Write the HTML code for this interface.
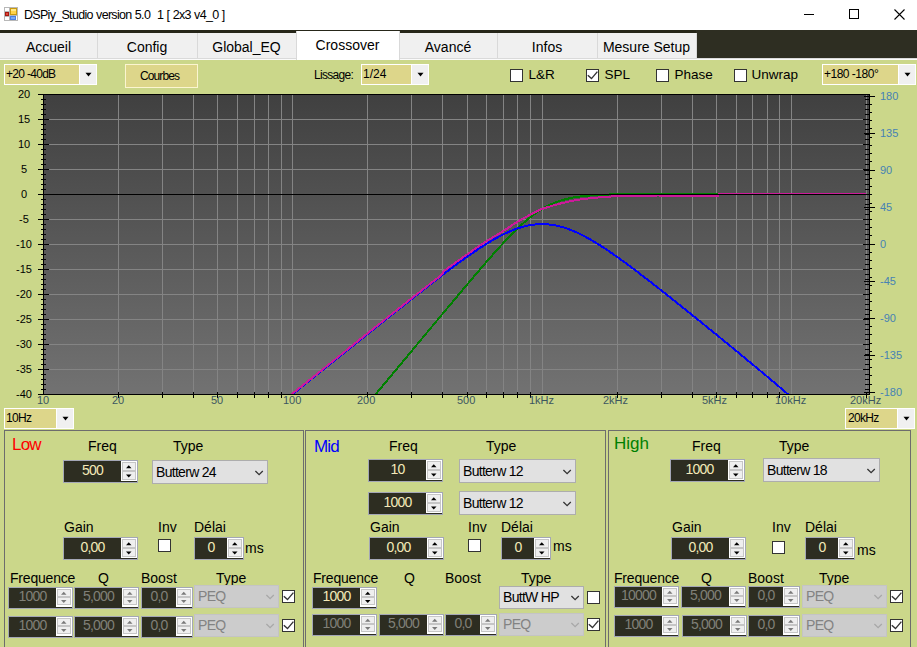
<!DOCTYPE html><html><head><meta charset="utf-8"><style>
*{margin:0;padding:0;box-sizing:border-box}
html,body{width:917px;height:647px;overflow:hidden;background:#fff;font-family:"Liberation Sans",sans-serif;color:#000}
.a{position:absolute}
.t{position:absolute;white-space:pre;line-height:1}
.cb{position:absolute;background:#fff;border:1px solid #333}
.combo{position:absolute;background:#fff}
.combo .y{position:absolute;left:1px;top:1px;bottom:1px;background:#ddd68a}
.combo .b{position:absolute;top:1px;bottom:1px;right:1px;background:#f0f0f0}
.tri{position:absolute;width:0;height:0;border-left:4px solid transparent;border-right:4px solid transparent;border-top:4px solid #000}
.spin{position:absolute;background:#fff;border:1px solid #a6a6b0}
.spin .d{position:absolute;left:0;top:-1px;bottom:1px;background:transparent;color:#f3e9b8;font-size:13px;letter-spacing:-0.3px;text-align:center}
.spin{background:#2d2d21}
.spin .bt{position:absolute;right:0;top:0;bottom:0;width:16px;background:#fff}
.grp{position:absolute;border:1px solid #6d6d6d;border-bottom:none}
.lbl{position:absolute;white-space:pre;font-size:14px;line-height:1}
.ddl{position:absolute;background:#e1e1e1;border:1px solid #adadad;font-size:14px}
</style></head><body>
<div class="a" style="left:0;top:0;width:917px;height:30px;background:#fff"></div>
<svg class="a" style="left:4px;top:7px" width="14" height="14" viewBox="0 0 14 14" shape-rendering="crispEdges">
<rect x="0" y="0" width="14" height="14" fill="#b8b8b8"/>
<rect x="1" y="1" width="4" height="3" fill="#fff"/>
<rect x="1" y="10" width="2" height="3" fill="#fff"/>
<rect x="3" y="10" width="2" height="3" fill="#fff"/>
<rect x="12" y="9" width="1" height="4" fill="#fff"/>
<rect x="6" y="1" width="7" height="7" fill="#c99a10"/>
<rect x="7" y="2" width="5" height="5" fill="#ffd34a"/>
<rect x="7" y="2" width="5" height="2" fill="#ffe98a"/>
<rect x="1" y="5" width="4" height="4" fill="#a81810"/>
<rect x="2" y="6" width="2" height="2" fill="#e04838"/>
<rect x="6" y="9" width="6" height="4" fill="#4a80e0"/>
<rect x="7" y="10" width="4" height="2" fill="#78a8f8"/>
</svg>
<div class="t" style="left:24px;top:8.5px;font-size:12.5px;color:#000;letter-spacing:-0.7px;word-spacing:0.6px">DSPiy_Studio version 5.0  1 [ 2x3 v4_0 ]</div>
<div class="a" style="left:804px;top:14px;width:10px;height:1px;background:#000"></div>
<div class="a" style="left:849px;top:9px;width:10px;height:10px;border:1px solid #000"></div>
<svg class="a" style="left:894px;top:9px" width="11" height="11"><path d="M0.5 0.5L10.5 10.5M10.5 0.5L0.5 10.5" stroke="#000" stroke-width="1.1"/></svg>
<div class="a" style="left:0;top:30px;width:917px;height:3px;background:#262619"></div>
<div class="a" style="left:696px;top:30px;width:221px;height:28px;background:#2e2e22"></div>
<div class="a" style="left:0;top:33px;width:696px;height:25px;background:#f0f0f0"></div>
<div class="a" style="left:0;top:58px;width:917px;height:1px;background:#dadada"></div>
<div class="a" style="left:0;top:59px;width:917px;height:1px;background:#fbfbfb"></div>
<div class="a" style="left:97px;top:33px;width:1px;height:25px;background:#d9d9d9"></div>
<div class="a" style="left:197px;top:33px;width:1px;height:25px;background:#d9d9d9"></div>
<div class="a" style="left:497px;top:33px;width:1px;height:25px;background:#d9d9d9"></div>
<div class="a" style="left:597px;top:33px;width:1px;height:25px;background:#d9d9d9"></div>
<div class="a" style="left:696px;top:33px;width:1px;height:25px;background:#d9d9d9"></div>
<div class="a" style="left:296px;top:31px;width:104px;height:29px;background:#fff;border-left:1px solid #d9d9d9;border-right:1px solid #d9d9d9"></div>
<div class="t" style="left:0px;top:40px;width:97px;text-align:center;font-size:14px">Accueil</div>
<div class="t" style="left:97px;top:40px;width:100px;text-align:center;font-size:14px">Config</div>
<div class="t" style="left:197px;top:40px;width:99px;text-align:center;font-size:14px">Global_EQ</div>
<div class="t" style="left:296px;top:38px;width:103px;text-align:center;font-size:14px">Crossover</div>
<div class="t" style="left:399px;top:40px;width:98px;text-align:center;font-size:14px">Avancé</div>
<div class="t" style="left:497px;top:40px;width:100px;text-align:center;font-size:14px">Infos</div>
<div class="t" style="left:597px;top:40px;width:99px;text-align:center;font-size:14px">Mesure Setup</div>
<div class="a" style="left:0;top:60px;width:917px;height:587px;background:#cbd78a"></div>
<div class="combo" style="left:4px;top:64px;width:93px;height:21px"><div class="y" style="right:18px"></div><div class="b" style="width:16px"><svg class="a" style="left:0;top:0" width="16" height="19"><path d="M5.5 7.7 L11.5 7.7 L8.5 11.5 Z" fill="#000"/></svg></div><div class="t" style="left:2px;top:4px;font-size:12px;letter-spacing:-0.70px">+20 -40dB</div></div>
<div class="a" style="left:125px;top:64px;width:73px;height:24px;background:#ddd68a;border:1px solid #fbf5d0"></div>
<div class="t" style="left:123px;top:70px;width:73px;text-align:center;font-size:12px;letter-spacing:-0.9px">Courbes</div>
<div class="t" style="left:314px;top:69px;font-size:12px;letter-spacing:-0.7px">Lissage:</div>
<div class="combo" style="left:361px;top:64px;width:68px;height:21px"><div class="y" style="right:18px"></div><div class="b" style="width:16px"><svg class="a" style="left:0;top:0" width="16" height="19"><path d="M5.5 7.7 L11.5 7.7 L8.5 11.5 Z" fill="#000"/></svg></div><div class="t" style="left:2px;top:4px;font-size:12px;letter-spacing:0.00px">1/24</div></div>
<div class="cb" style="left:510px;top:69px;width:13px;height:13px"></div><div class="lbl" style="left:528.5px;top:68px;font-size:13.5px">L&amp;R</div>
<div class="cb" style="left:586px;top:69px;width:13px;height:13px"><svg class="a" style="left:0;top:0" width="11" height="11"><path d="M0.8 5.2L4.5 8.6L10.4 1.6" fill="none" stroke="#333" stroke-width="1.4"/></svg></div><div class="lbl" style="left:604.5px;top:68px;font-size:13.5px">SPL</div>
<div class="cb" style="left:656px;top:69px;width:13px;height:13px"></div><div class="lbl" style="left:674.5px;top:68px;font-size:13.5px">Phase</div>
<div class="cb" style="left:734px;top:69px;width:13px;height:13px"></div><div class="lbl" style="left:751.5px;top:68px;font-size:13.5px">Unwrap</div>
<div class="combo" style="left:822px;top:64px;width:94px;height:21px"><div class="y" style="right:18px"></div><div class="b" style="width:16px"><svg class="a" style="left:0;top:0" width="16" height="19"><path d="M5.5 7.7 L11.5 7.7 L8.5 11.5 Z" fill="#000"/></svg></div><div class="t" style="left:2px;top:4px;font-size:12px;letter-spacing:-0.50px">+180 -180°</div></div>
<svg class="a" style="left:0;top:0" width="917" height="647"><defs><linearGradient id="g" x1="0" y1="0" x2="0" y2="1"><stop offset="0" stop-color="#404040"/><stop offset="1" stop-color="#727272"/></linearGradient></defs><rect x="43" y="94" width="826" height="300" fill="url(#g)"/><line x1="118.5" y1="95" x2="118.5" y2="394" stroke="#848484" stroke-width="1"/><line x1="162.5" y1="95" x2="162.5" y2="394" stroke="#848484" stroke-width="1"/><line x1="193.5" y1="95" x2="193.5" y2="394" stroke="#848484" stroke-width="1"/><line x1="217.5" y1="95" x2="217.5" y2="394" stroke="#848484" stroke-width="1"/><line x1="237.5" y1="95" x2="237.5" y2="394" stroke="#848484" stroke-width="1"/><line x1="254.5" y1="95" x2="254.5" y2="394" stroke="#848484" stroke-width="1"/><line x1="268.5" y1="95" x2="268.5" y2="394" stroke="#848484" stroke-width="1"/><line x1="281.5" y1="95" x2="281.5" y2="394" stroke="#848484" stroke-width="1"/><line x1="292.5" y1="95" x2="292.5" y2="394" stroke="#848484" stroke-width="1"/><line x1="367.5" y1="95" x2="367.5" y2="394" stroke="#848484" stroke-width="1"/><line x1="411.5" y1="95" x2="411.5" y2="394" stroke="#848484" stroke-width="1"/><line x1="442.5" y1="95" x2="442.5" y2="394" stroke="#848484" stroke-width="1"/><line x1="467.5" y1="95" x2="467.5" y2="394" stroke="#848484" stroke-width="1"/><line x1="486.5" y1="95" x2="486.5" y2="394" stroke="#848484" stroke-width="1"/><line x1="503.5" y1="95" x2="503.5" y2="394" stroke="#848484" stroke-width="1"/><line x1="517.5" y1="95" x2="517.5" y2="394" stroke="#848484" stroke-width="1"/><line x1="530.5" y1="95" x2="530.5" y2="394" stroke="#848484" stroke-width="1"/><line x1="542.5" y1="95" x2="542.5" y2="394" stroke="#848484" stroke-width="1"/><line x1="617.5" y1="95" x2="617.5" y2="394" stroke="#848484" stroke-width="1"/><line x1="661.5" y1="95" x2="661.5" y2="394" stroke="#848484" stroke-width="1"/><line x1="692.5" y1="95" x2="692.5" y2="394" stroke="#848484" stroke-width="1"/><line x1="716.5" y1="95" x2="716.5" y2="394" stroke="#848484" stroke-width="1"/><line x1="736.5" y1="95" x2="736.5" y2="394" stroke="#848484" stroke-width="1"/><line x1="752.5" y1="95" x2="752.5" y2="394" stroke="#848484" stroke-width="1"/><line x1="767.5" y1="95" x2="767.5" y2="394" stroke="#848484" stroke-width="1"/><line x1="779.5" y1="95" x2="779.5" y2="394" stroke="#848484" stroke-width="1"/><line x1="791.5" y1="95" x2="791.5" y2="394" stroke="#848484" stroke-width="1"/><line x1="866.5" y1="95" x2="866.5" y2="394" stroke="#848484" stroke-width="1"/><line x1="44" y1="119.5" x2="869" y2="119.5" stroke="#848484" stroke-width="1"/><line x1="44" y1="144.5" x2="869" y2="144.5" stroke="#848484" stroke-width="1"/><line x1="44" y1="169.5" x2="869" y2="169.5" stroke="#848484" stroke-width="1"/><line x1="44" y1="219.5" x2="869" y2="219.5" stroke="#848484" stroke-width="1"/><line x1="44" y1="244.5" x2="869" y2="244.5" stroke="#848484" stroke-width="1"/><line x1="44" y1="269.5" x2="869" y2="269.5" stroke="#848484" stroke-width="1"/><line x1="44" y1="294.5" x2="869" y2="294.5" stroke="#848484" stroke-width="1"/><line x1="44" y1="319.5" x2="869" y2="319.5" stroke="#848484" stroke-width="1"/><line x1="44" y1="344.5" x2="869" y2="344.5" stroke="#848484" stroke-width="1"/><line x1="44" y1="369.5" x2="869" y2="369.5" stroke="#848484" stroke-width="1"/><rect x="43" y="94" width="1" height="301" fill="#000"/><rect x="38" y="94" width="831" height="1" fill="#000"/><rect x="38" y="394" width="832" height="1" fill="#000"/><rect x="869" y="94" width="1" height="301" fill="#000"/><line x1="38" y1="94.5" x2="49" y2="94.5" stroke="#000"/><line x1="41" y1="99.5" x2="46" y2="99.5" stroke="#000"/><line x1="41" y1="104.5" x2="46" y2="104.5" stroke="#000"/><line x1="41" y1="109.5" x2="46" y2="109.5" stroke="#000"/><line x1="41" y1="114.5" x2="46" y2="114.5" stroke="#000"/><line x1="38" y1="119.5" x2="49" y2="119.5" stroke="#000"/><line x1="41" y1="124.5" x2="46" y2="124.5" stroke="#000"/><line x1="41" y1="129.5" x2="46" y2="129.5" stroke="#000"/><line x1="41" y1="134.5" x2="46" y2="134.5" stroke="#000"/><line x1="41" y1="139.5" x2="46" y2="139.5" stroke="#000"/><line x1="38" y1="144.5" x2="49" y2="144.5" stroke="#000"/><line x1="41" y1="149.5" x2="46" y2="149.5" stroke="#000"/><line x1="41" y1="154.5" x2="46" y2="154.5" stroke="#000"/><line x1="41" y1="159.5" x2="46" y2="159.5" stroke="#000"/><line x1="41" y1="164.5" x2="46" y2="164.5" stroke="#000"/><line x1="38" y1="169.5" x2="49" y2="169.5" stroke="#000"/><line x1="41" y1="174.5" x2="46" y2="174.5" stroke="#000"/><line x1="41" y1="179.5" x2="46" y2="179.5" stroke="#000"/><line x1="41" y1="184.5" x2="46" y2="184.5" stroke="#000"/><line x1="41" y1="189.5" x2="46" y2="189.5" stroke="#000"/><line x1="38" y1="194.5" x2="49" y2="194.5" stroke="#000"/><line x1="41" y1="199.5" x2="46" y2="199.5" stroke="#000"/><line x1="41" y1="204.5" x2="46" y2="204.5" stroke="#000"/><line x1="41" y1="209.5" x2="46" y2="209.5" stroke="#000"/><line x1="41" y1="214.5" x2="46" y2="214.5" stroke="#000"/><line x1="38" y1="219.5" x2="49" y2="219.5" stroke="#000"/><line x1="41" y1="224.5" x2="46" y2="224.5" stroke="#000"/><line x1="41" y1="229.5" x2="46" y2="229.5" stroke="#000"/><line x1="41" y1="234.5" x2="46" y2="234.5" stroke="#000"/><line x1="41" y1="239.5" x2="46" y2="239.5" stroke="#000"/><line x1="38" y1="244.5" x2="49" y2="244.5" stroke="#000"/><line x1="41" y1="249.5" x2="46" y2="249.5" stroke="#000"/><line x1="41" y1="254.5" x2="46" y2="254.5" stroke="#000"/><line x1="41" y1="259.5" x2="46" y2="259.5" stroke="#000"/><line x1="41" y1="264.5" x2="46" y2="264.5" stroke="#000"/><line x1="38" y1="269.5" x2="49" y2="269.5" stroke="#000"/><line x1="41" y1="274.5" x2="46" y2="274.5" stroke="#000"/><line x1="41" y1="279.5" x2="46" y2="279.5" stroke="#000"/><line x1="41" y1="284.5" x2="46" y2="284.5" stroke="#000"/><line x1="41" y1="289.5" x2="46" y2="289.5" stroke="#000"/><line x1="38" y1="294.5" x2="49" y2="294.5" stroke="#000"/><line x1="41" y1="299.5" x2="46" y2="299.5" stroke="#000"/><line x1="41" y1="304.5" x2="46" y2="304.5" stroke="#000"/><line x1="41" y1="309.5" x2="46" y2="309.5" stroke="#000"/><line x1="41" y1="314.5" x2="46" y2="314.5" stroke="#000"/><line x1="38" y1="319.5" x2="49" y2="319.5" stroke="#000"/><line x1="41" y1="324.5" x2="46" y2="324.5" stroke="#000"/><line x1="41" y1="329.5" x2="46" y2="329.5" stroke="#000"/><line x1="41" y1="334.5" x2="46" y2="334.5" stroke="#000"/><line x1="41" y1="339.5" x2="46" y2="339.5" stroke="#000"/><line x1="38" y1="344.5" x2="49" y2="344.5" stroke="#000"/><line x1="41" y1="349.5" x2="46" y2="349.5" stroke="#000"/><line x1="41" y1="354.5" x2="46" y2="354.5" stroke="#000"/><line x1="41" y1="359.5" x2="46" y2="359.5" stroke="#000"/><line x1="41" y1="364.5" x2="46" y2="364.5" stroke="#000"/><line x1="38" y1="369.5" x2="49" y2="369.5" stroke="#000"/><line x1="41" y1="374.5" x2="46" y2="374.5" stroke="#000"/><line x1="41" y1="379.5" x2="46" y2="379.5" stroke="#000"/><line x1="41" y1="384.5" x2="46" y2="384.5" stroke="#000"/><line x1="41" y1="389.5" x2="46" y2="389.5" stroke="#000"/><line x1="38" y1="394.5" x2="49" y2="394.5" stroke="#000"/><line x1="118.5" y1="392" x2="118.5" y2="398" stroke="#000"/><line x1="162.5" y1="392" x2="162.5" y2="398" stroke="#000"/><line x1="193.5" y1="392" x2="193.5" y2="398" stroke="#000"/><line x1="217.5" y1="392" x2="217.5" y2="398" stroke="#000"/><line x1="237.5" y1="392" x2="237.5" y2="398" stroke="#000"/><line x1="254.5" y1="392" x2="254.5" y2="398" stroke="#000"/><line x1="268.5" y1="392" x2="268.5" y2="398" stroke="#000"/><line x1="281.5" y1="392" x2="281.5" y2="398" stroke="#000"/><line x1="367.5" y1="392" x2="367.5" y2="398" stroke="#000"/><line x1="411.5" y1="392" x2="411.5" y2="398" stroke="#000"/><line x1="442.5" y1="392" x2="442.5" y2="398" stroke="#000"/><line x1="467.5" y1="392" x2="467.5" y2="398" stroke="#000"/><line x1="486.5" y1="392" x2="486.5" y2="398" stroke="#000"/><line x1="503.5" y1="392" x2="503.5" y2="398" stroke="#000"/><line x1="517.5" y1="392" x2="517.5" y2="398" stroke="#000"/><line x1="530.5" y1="392" x2="530.5" y2="398" stroke="#000"/><line x1="617.5" y1="392" x2="617.5" y2="398" stroke="#000"/><line x1="661.5" y1="392" x2="661.5" y2="398" stroke="#000"/><line x1="692.5" y1="392" x2="692.5" y2="398" stroke="#000"/><line x1="716.5" y1="392" x2="716.5" y2="398" stroke="#000"/><line x1="736.5" y1="392" x2="736.5" y2="398" stroke="#000"/><line x1="752.5" y1="392" x2="752.5" y2="398" stroke="#000"/><line x1="767.5" y1="392" x2="767.5" y2="398" stroke="#000"/><line x1="779.5" y1="392" x2="779.5" y2="398" stroke="#000"/><line x1="866.5" y1="392" x2="866.5" y2="398" stroke="#000"/><line x1="863" y1="94.5" x2="869" y2="94.5" stroke="#000"/><line x1="865" y1="99.5" x2="869" y2="99.5" stroke="#000"/><line x1="865" y1="104.5" x2="869" y2="104.5" stroke="#000"/><line x1="865" y1="109.5" x2="869" y2="109.5" stroke="#000"/><line x1="865" y1="114.5" x2="869" y2="114.5" stroke="#000"/><line x1="863" y1="119.5" x2="869" y2="119.5" stroke="#000"/><line x1="865" y1="124.5" x2="869" y2="124.5" stroke="#000"/><line x1="865" y1="129.5" x2="869" y2="129.5" stroke="#000"/><line x1="865" y1="134.5" x2="869" y2="134.5" stroke="#000"/><line x1="865" y1="139.5" x2="869" y2="139.5" stroke="#000"/><line x1="863" y1="144.5" x2="869" y2="144.5" stroke="#000"/><line x1="865" y1="149.5" x2="869" y2="149.5" stroke="#000"/><line x1="865" y1="154.5" x2="869" y2="154.5" stroke="#000"/><line x1="865" y1="159.5" x2="869" y2="159.5" stroke="#000"/><line x1="865" y1="164.5" x2="869" y2="164.5" stroke="#000"/><line x1="863" y1="169.5" x2="869" y2="169.5" stroke="#000"/><line x1="865" y1="174.5" x2="869" y2="174.5" stroke="#000"/><line x1="865" y1="179.5" x2="869" y2="179.5" stroke="#000"/><line x1="865" y1="184.5" x2="869" y2="184.5" stroke="#000"/><line x1="865" y1="189.5" x2="869" y2="189.5" stroke="#000"/><line x1="863" y1="194.5" x2="869" y2="194.5" stroke="#000"/><line x1="865" y1="199.5" x2="869" y2="199.5" stroke="#000"/><line x1="865" y1="204.5" x2="869" y2="204.5" stroke="#000"/><line x1="865" y1="209.5" x2="869" y2="209.5" stroke="#000"/><line x1="865" y1="214.5" x2="869" y2="214.5" stroke="#000"/><line x1="863" y1="219.5" x2="869" y2="219.5" stroke="#000"/><line x1="865" y1="224.5" x2="869" y2="224.5" stroke="#000"/><line x1="865" y1="229.5" x2="869" y2="229.5" stroke="#000"/><line x1="865" y1="234.5" x2="869" y2="234.5" stroke="#000"/><line x1="865" y1="239.5" x2="869" y2="239.5" stroke="#000"/><line x1="863" y1="244.5" x2="869" y2="244.5" stroke="#000"/><line x1="865" y1="249.5" x2="869" y2="249.5" stroke="#000"/><line x1="865" y1="254.5" x2="869" y2="254.5" stroke="#000"/><line x1="865" y1="259.5" x2="869" y2="259.5" stroke="#000"/><line x1="865" y1="264.5" x2="869" y2="264.5" stroke="#000"/><line x1="863" y1="269.5" x2="869" y2="269.5" stroke="#000"/><line x1="865" y1="274.5" x2="869" y2="274.5" stroke="#000"/><line x1="865" y1="279.5" x2="869" y2="279.5" stroke="#000"/><line x1="865" y1="284.5" x2="869" y2="284.5" stroke="#000"/><line x1="865" y1="289.5" x2="869" y2="289.5" stroke="#000"/><line x1="863" y1="294.5" x2="869" y2="294.5" stroke="#000"/><line x1="865" y1="299.5" x2="869" y2="299.5" stroke="#000"/><line x1="865" y1="304.5" x2="869" y2="304.5" stroke="#000"/><line x1="865" y1="309.5" x2="869" y2="309.5" stroke="#000"/><line x1="865" y1="314.5" x2="869" y2="314.5" stroke="#000"/><line x1="863" y1="319.5" x2="869" y2="319.5" stroke="#000"/><line x1="865" y1="324.5" x2="869" y2="324.5" stroke="#000"/><line x1="865" y1="329.5" x2="869" y2="329.5" stroke="#000"/><line x1="865" y1="334.5" x2="869" y2="334.5" stroke="#000"/><line x1="865" y1="339.5" x2="869" y2="339.5" stroke="#000"/><line x1="863" y1="344.5" x2="869" y2="344.5" stroke="#000"/><line x1="865" y1="349.5" x2="869" y2="349.5" stroke="#000"/><line x1="865" y1="354.5" x2="869" y2="354.5" stroke="#000"/><line x1="865" y1="359.5" x2="869" y2="359.5" stroke="#000"/><line x1="865" y1="364.5" x2="869" y2="364.5" stroke="#000"/><line x1="863" y1="369.5" x2="869" y2="369.5" stroke="#000"/><line x1="865" y1="374.5" x2="869" y2="374.5" stroke="#000"/><line x1="865" y1="379.5" x2="869" y2="379.5" stroke="#000"/><line x1="865" y1="384.5" x2="869" y2="384.5" stroke="#000"/><line x1="865" y1="389.5" x2="869" y2="389.5" stroke="#000"/><line x1="863" y1="394.5" x2="869" y2="394.5" stroke="#000"/><line x1="869" y1="96.5" x2="872" y2="96.5" stroke="#000"/><line x1="869" y1="104.5" x2="872" y2="104.5" stroke="#000"/><line x1="869" y1="112.5" x2="872" y2="112.5" stroke="#000"/><line x1="869" y1="120.5" x2="872" y2="120.5" stroke="#000"/><line x1="869" y1="128.5" x2="872" y2="128.5" stroke="#000"/><line x1="869" y1="137.5" x2="872" y2="137.5" stroke="#000"/><line x1="869" y1="145.5" x2="872" y2="145.5" stroke="#000"/><line x1="869" y1="153.5" x2="872" y2="153.5" stroke="#000"/><line x1="869" y1="161.5" x2="872" y2="161.5" stroke="#000"/><line x1="869" y1="170.5" x2="872" y2="170.5" stroke="#000"/><line x1="869" y1="178.5" x2="872" y2="178.5" stroke="#000"/><line x1="869" y1="186.5" x2="872" y2="186.5" stroke="#000"/><line x1="869" y1="194.5" x2="872" y2="194.5" stroke="#000"/><line x1="869" y1="203.5" x2="872" y2="203.5" stroke="#000"/><line x1="869" y1="211.5" x2="872" y2="211.5" stroke="#000"/><line x1="869" y1="219.5" x2="872" y2="219.5" stroke="#000"/><line x1="869" y1="227.5" x2="872" y2="227.5" stroke="#000"/><line x1="869" y1="235.5" x2="872" y2="235.5" stroke="#000"/><line x1="869" y1="244.5" x2="872" y2="244.5" stroke="#000"/><line x1="869" y1="252.5" x2="872" y2="252.5" stroke="#000"/><line x1="869" y1="260.5" x2="872" y2="260.5" stroke="#000"/><line x1="869" y1="268.5" x2="872" y2="268.5" stroke="#000"/><line x1="869" y1="277.5" x2="872" y2="277.5" stroke="#000"/><line x1="869" y1="285.5" x2="872" y2="285.5" stroke="#000"/><line x1="869" y1="293.5" x2="872" y2="293.5" stroke="#000"/><line x1="869" y1="301.5" x2="872" y2="301.5" stroke="#000"/><line x1="869" y1="310.5" x2="872" y2="310.5" stroke="#000"/><line x1="869" y1="318.5" x2="872" y2="318.5" stroke="#000"/><line x1="869" y1="326.5" x2="872" y2="326.5" stroke="#000"/><line x1="869" y1="334.5" x2="872" y2="334.5" stroke="#000"/><line x1="869" y1="343.5" x2="872" y2="343.5" stroke="#000"/><line x1="869" y1="351.5" x2="872" y2="351.5" stroke="#000"/><line x1="869" y1="359.5" x2="872" y2="359.5" stroke="#000"/><line x1="869" y1="367.5" x2="872" y2="367.5" stroke="#000"/><line x1="869" y1="375.5" x2="872" y2="375.5" stroke="#000"/><line x1="869" y1="384.5" x2="872" y2="384.5" stroke="#000"/><line x1="869" y1="392.5" x2="872" y2="392.5" stroke="#000"/><line x1="864" y1="96.5" x2="875" y2="96.5" stroke="#000"/><line x1="864" y1="133.5" x2="875" y2="133.5" stroke="#000"/><line x1="864" y1="170.5" x2="875" y2="170.5" stroke="#000"/><line x1="864" y1="207.5" x2="875" y2="207.5" stroke="#000"/><line x1="864" y1="244.5" x2="875" y2="244.5" stroke="#000"/><line x1="864" y1="281.5" x2="875" y2="281.5" stroke="#000"/><line x1="864" y1="318.5" x2="875" y2="318.5" stroke="#000"/><line x1="864" y1="355.5" x2="875" y2="355.5" stroke="#000"/><line x1="864" y1="392.5" x2="875" y2="392.5" stroke="#000"/><clipPath id="c"><rect x="45" y="95" width="824" height="299"/></clipPath><g clip-path="url(#c)"><path d="M43.46 794.05 L44.28 793.06 L45.11 792.06 L45.93 791.07 L46.76 790.08 L47.58 789.09 L48.40 788.10 L49.23 787.11 L50.05 786.12 L50.87 785.12 L51.70 784.13 L52.52 783.14 L53.35 782.15 L54.17 781.16 L54.99 780.17 L55.82 779.18 L56.64 778.19 L57.46 777.19 L58.29 776.20 L59.11 775.21 L59.94 774.22 L60.76 773.23 L61.58 772.24 L62.41 771.25 L63.23 770.26 L64.05 769.26 L64.88 768.27 L65.70 767.28 L66.53 766.29 L67.35 765.30 L68.17 764.31 L69.00 763.32 L69.82 762.33 L70.64 761.33 L71.47 760.34 L72.29 759.35 L73.12 758.36 L73.94 757.37 L74.76 756.38 L75.59 755.39 L76.41 754.39 L77.23 753.40 L78.06 752.41 L78.88 751.42 L79.71 750.43 L80.53 749.44 L81.35 748.45 L82.18 747.46 L83.00 746.46 L83.82 745.47 L84.65 744.48 L85.47 743.49 L86.30 742.50 L87.12 741.51 L87.94 740.52 L88.77 739.53 L89.59 738.53 L90.41 737.54 L91.24 736.55 L92.06 735.56 L92.89 734.57 L93.71 733.58 L94.53 732.59 L95.36 731.60 L96.18 730.60 L97.00 729.61 L97.83 728.62 L98.65 727.63 L99.48 726.64 L100.30 725.65 L101.12 724.66 L101.95 723.66 L102.77 722.67 L103.59 721.68 L104.42 720.69 L105.24 719.70 L106.07 718.71 L106.89 717.72 L107.71 716.73 L108.54 715.73 L109.36 714.74 L110.18 713.75 L111.01 712.76 L111.83 711.77 L112.66 710.78 L113.48 709.79 L114.30 708.80 L115.13 707.80 L115.95 706.81 L116.77 705.82 L117.60 704.83 L118.42 703.84 L119.25 702.85 L120.07 701.86 L120.89 700.87 L121.72 699.87 L122.54 698.88 L123.37 697.89 L124.19 696.90 L125.01 695.91 L125.84 694.92 L126.66 693.93 L127.48 692.93 L128.31 691.94 L129.13 690.95 L129.96 689.96 L130.78 688.97 L131.60 687.98 L132.43 686.99 L133.25 686.00 L134.07 685.00 L134.90 684.01 L135.72 683.02 L136.55 682.03 L137.37 681.04 L138.19 680.05 L139.02 679.06 L139.84 678.07 L140.66 677.07 L141.49 676.08 L142.31 675.09 L143.14 674.10 L143.96 673.11 L144.78 672.12 L145.61 671.13 L146.43 670.14 L147.25 669.14 L148.08 668.15 L148.90 667.16 L149.73 666.17 L150.55 665.18 L151.37 664.19 L152.20 663.20 L153.02 662.20 L153.84 661.21 L154.67 660.22 L155.49 659.23 L156.32 658.24 L157.14 657.25 L157.96 656.26 L158.79 655.27 L159.61 654.27 L160.43 653.28 L161.26 652.29 L162.08 651.30 L162.91 650.31 L163.73 649.32 L164.55 648.33 L165.38 647.34 L166.20 646.34 L167.02 645.35 L167.85 644.36 L168.67 643.37 L169.50 642.38 L170.32 641.39 L171.14 640.40 L171.97 639.41 L172.79 638.41 L173.61 637.42 L174.44 636.43 L175.26 635.44 L176.09 634.45 L176.91 633.46 L177.73 632.47 L178.56 631.47 L179.38 630.48 L180.20 629.49 L181.03 628.50 L181.85 627.51 L182.68 626.52 L183.50 625.53 L184.32 624.54 L185.15 623.54 L185.97 622.55 L186.79 621.56 L187.62 620.57 L188.44 619.58 L189.27 618.59 L190.09 617.60 L190.91 616.61 L191.74 615.61 L192.56 614.62 L193.38 613.63 L194.21 612.64 L195.03 611.65 L195.86 610.66 L196.68 609.67 L197.50 608.67 L198.33 607.68 L199.15 606.69 L199.97 605.70 L200.80 604.71 L201.62 603.72 L202.45 602.73 L203.27 601.74 L204.09 600.74 L204.92 599.75 L205.74 598.76 L206.57 597.77 L207.39 596.78 L208.21 595.79 L209.04 594.80 L209.86 593.81 L210.68 592.81 L211.51 591.82 L212.33 590.83 L213.16 589.84 L213.98 588.85 L214.80 587.86 L215.63 586.87 L216.45 585.88 L217.27 584.88 L218.10 583.89 L218.92 582.90 L219.75 581.91 L220.57 580.92 L221.39 579.93 L222.22 578.94 L223.04 577.94 L223.86 576.95 L224.69 575.96 L225.51 574.97 L226.34 573.98 L227.16 572.99 L227.98 572.00 L228.81 571.01 L229.63 570.01 L230.45 569.02 L231.28 568.03 L232.10 567.04 L232.93 566.05 L233.75 565.06 L234.57 564.07 L235.40 563.08 L236.22 562.08 L237.04 561.09 L237.87 560.10 L238.69 559.11 L239.52 558.12 L240.34 557.13 L241.16 556.14 L241.99 555.15 L242.81 554.15 L243.63 553.16 L244.46 552.17 L245.28 551.18 L246.11 550.19 L246.93 549.20 L247.75 548.21 L248.58 547.21 L249.40 546.22 L250.22 545.23 L251.05 544.24 L251.87 543.25 L252.70 542.26 L253.52 541.27 L254.34 540.28 L255.17 539.28 L255.99 538.29 L256.81 537.30 L257.64 536.31 L258.46 535.32 L259.29 534.33 L260.11 533.34 L260.93 532.35 L261.76 531.35 L262.58 530.36 L263.40 529.37 L264.23 528.38 L265.05 527.39 L265.88 526.40 L266.70 525.41 L267.52 524.42 L268.35 523.42 L269.17 522.43 L269.99 521.44 L270.82 520.45 L271.64 519.46 L272.47 518.47 L273.29 517.48 L274.11 516.48 L274.94 515.49 L275.76 514.50 L276.58 513.51 L277.41 512.52 L278.23 511.53 L279.06 510.54 L279.88 509.55 L280.70 508.55 L281.53 507.56 L282.35 506.57 L283.18 505.58 L284.00 504.59 L284.82 503.60 L285.65 502.61 L286.47 501.62 L287.29 500.62 L288.12 499.63 L288.94 498.64 L289.77 497.65 L290.59 496.66 L291.41 495.67 L292.24 494.68 L293.06 493.68 L293.88 492.69 L294.71 491.70 L295.53 490.71 L296.36 489.72 L297.18 488.73 L298.00 487.74 L298.83 486.75 L299.65 485.75 L300.47 484.76 L301.30 483.77 L302.12 482.78 L302.95 481.79 L303.77 480.80 L304.59 479.81 L305.42 478.82 L306.24 477.82 L307.06 476.83 L307.89 475.84 L308.71 474.85 L309.54 473.86 L310.36 472.87 L311.18 471.88 L312.01 470.88 L312.83 469.89 L313.65 468.90 L314.48 467.91 L315.30 466.92 L316.13 465.93 L316.95 464.94 L317.77 463.95 L318.60 462.95 L319.42 461.96 L320.24 460.97 L321.07 459.98 L321.89 458.99 L322.72 458.00 L323.54 457.01 L324.36 456.02 L325.19 455.02 L326.01 454.03 L326.83 453.04 L327.66 452.05 L328.48 451.06 L329.31 450.07 L330.13 449.08 L330.95 448.09 L331.78 447.09 L332.60 446.10 L333.42 445.11 L334.25 444.12 L335.07 443.13 L335.90 442.14 L336.72 441.15 L337.54 440.15 L338.37 439.16 L339.19 438.17 L340.01 437.18 L340.84 436.19 L341.66 435.20 L342.49 434.21 L343.31 433.22 L344.13 432.22 L344.96 431.23 L345.78 430.24 L346.60 429.25 L347.43 428.26 L348.25 427.27 L349.08 426.28 L349.90 425.29 L350.72 424.29 L351.55 423.30 L352.37 422.31 L353.19 421.32 L354.02 420.33 L354.84 419.34 L355.67 418.35 L356.49 417.36 L357.31 416.36 L358.14 415.37 L358.96 414.38 L359.79 413.39 L360.61 412.40 L361.43 411.41 L362.26 410.42 L363.08 409.42 L363.90 408.43 L364.73 407.44 L365.55 406.45 L366.38 405.46 L367.20 404.47 L368.02 403.48 L368.85 402.49 L369.67 401.49 L370.49 400.50 L371.32 399.51 L372.14 398.52 L372.97 397.53 L373.79 396.54 L374.61 395.55 L375.44 394.56 L376.26 393.56 L377.08 392.57 L377.91 391.58 L378.73 390.59 L379.56 389.60 L380.38 388.61 L381.20 387.62 L382.03 386.63 L382.85 385.64 L383.67 384.64 L384.50 383.65 L385.32 382.66 L386.15 381.67 L386.97 380.68 L387.79 379.69 L388.62 378.70 L389.44 377.71 L390.26 376.71 L391.09 375.72 L391.91 374.73 L392.74 373.74 L393.56 372.75 L394.38 371.76 L395.21 370.77 L396.03 369.78 L396.85 368.79 L397.68 367.80 L398.50 366.80 L399.33 365.81 L400.15 364.82 L400.97 363.83 L401.80 362.84 L402.62 361.85 L403.44 360.86 L404.27 359.87 L405.09 358.88 L405.92 357.89 L406.74 356.90 L407.56 355.90 L408.39 354.91 L409.21 353.92 L410.03 352.93 L410.86 351.94 L411.68 350.95 L412.51 349.96 L413.33 348.97 L414.15 347.98 L414.98 346.99 L415.80 346.00 L416.62 345.01 L417.45 344.02 L418.27 343.03 L419.10 342.04 L419.92 341.05 L420.74 340.06 L421.57 339.07 L422.39 338.08 L423.21 337.09 L424.04 336.10 L424.86 335.11 L425.69 334.12 L426.51 333.13 L427.33 332.14 L428.16 331.15 L428.98 330.16 L429.80 329.17 L430.63 328.18 L431.45 327.19 L432.28 326.20 L433.10 325.21 L433.92 324.22 L434.75 323.23 L435.57 322.24 L436.39 321.26 L437.22 320.27 L438.04 319.28 L438.87 318.29 L439.69 317.30 L440.51 316.31 L441.34 315.33 L442.16 314.34 L442.99 313.35 L443.81 312.36 L444.63 311.38 L445.46 310.39 L446.28 309.40 L447.10 308.42 L447.93 307.43 L448.75 306.45 L449.58 305.46 L450.40 304.47 L451.22 303.49 L452.05 302.50 L452.87 301.52 L453.69 300.54 L454.52 299.55 L455.34 298.57 L456.17 297.58 L456.99 296.60 L457.81 295.62 L458.64 294.64 L459.46 293.66 L460.28 292.67 L461.11 291.69 L461.93 290.71 L462.76 289.73 L463.58 288.76 L464.40 287.78 L465.23 286.80 L466.05 285.82 L466.87 284.84 L467.70 283.87 L468.52 282.89 L469.35 281.92 L470.17 280.95 L470.99 279.97 L471.82 279.00 L472.64 278.03 L473.46 277.06 L474.29 276.09 L475.11 275.12 L475.94 274.15 L476.76 273.19 L477.58 272.22 L478.41 271.26 L479.23 270.30 L480.05 269.33 L480.88 268.37 L481.70 267.42 L482.53 266.46 L483.35 265.50 L484.17 264.55 L485.00 263.60 L485.82 262.65 L486.64 261.70 L487.47 260.75 L488.29 259.81 L489.12 258.86 L489.94 257.92 L490.76 256.99 L491.59 256.05 L492.41 255.12 L493.23 254.19 L494.06 253.26 L494.88 252.33 L495.71 251.41 L496.53 250.49 L497.35 249.57 L498.18 248.66 L499.00 247.75 L499.82 246.84 L500.65 245.94 L501.47 245.04 L502.30 244.15 L503.12 243.26 L503.94 242.37 L504.77 241.49 L505.59 240.61 L506.41 239.73 L507.24 238.87 L508.06 238.00 L508.89 237.14 L509.71 236.29 L510.53 235.44 L511.36 234.60 L512.18 233.77 L513.00 232.94 L513.83 232.11 L514.65 231.30 L515.48 230.49 L516.30 229.68 L517.12 228.89 L517.95 228.10 L518.77 227.32 L519.60 226.54 L520.42 225.77 L521.24 225.02 L522.07 224.27 L522.89 223.53 L523.71 222.79 L524.54 222.07 L525.36 221.35 L526.19 220.65 L527.01 219.95 L527.83 219.26 L528.66 218.59 L529.48 217.92 L530.30 217.26 L531.13 216.62 L531.95 215.98 L532.78 215.35 L533.60 214.74 L534.42 214.13 L535.25 213.54 L536.07 212.96 L536.89 212.38 L537.72 211.82 L538.54 211.27 L539.37 210.73 L540.19 210.21 L541.01 209.69 L541.84 209.19 L542.66 208.69 L543.48 208.21 L544.31 207.74 L545.13 207.28 L545.96 206.83 L546.78 206.40 L547.60 205.97 L548.43 205.55 L549.25 205.15 L550.07 204.76 L550.90 204.38 L551.72 204.00 L552.55 203.64 L553.37 203.29 L554.19 202.95 L555.02 202.62 L555.84 202.30 L556.66 201.99 L557.49 201.69 L558.31 201.40 L559.14 201.12 L559.96 200.84 L560.78 200.58 L561.61 200.33 L562.43 200.08 L563.25 199.84 L564.08 199.61 L564.90 199.39 L565.73 199.17 L566.55 198.97 L567.37 198.77 L568.20 198.58 L569.02 198.39 L569.84 198.21 L570.67 198.04 L571.49 197.88 L572.32 197.72 L573.14 197.56 L573.96 197.42 L574.79 197.27 L575.61 197.14 L576.43 197.01 L577.26 196.88 L578.08 196.76 L578.91 196.64 L579.73 196.53 L580.55 196.43 L581.38 196.32 L582.20 196.22 L583.02 196.13 L583.85 196.04 L584.67 195.95 L585.50 195.87 L586.32 195.79 L587.14 195.71 L587.97 195.64 L588.79 195.57 L589.61 195.50 L590.44 195.43 L591.26 195.37 L592.09 195.31 L592.91 195.26 L593.73 195.20 L594.56 195.15 L595.38 195.10 L596.21 195.05 L597.03 195.00 L597.85 194.96 L598.68 194.92 L599.50 194.88 L600.32 194.84 L601.15 194.80 L601.97 194.77 L602.80 194.73 L603.62 194.70 L604.44 194.67 L605.27 194.64 L606.09 194.61 L606.91 194.59 L607.74 194.56 L608.56 194.54 L609.39 194.51 L610.21 194.49 L611.03 194.47 L611.86 194.45 L612.68 194.43 L613.50 194.41 L614.33 194.39 L615.15 194.37 L615.98 194.36 L616.80 194.34 L617.62 194.33 L618.45 194.31 L619.27 194.30 L620.09 194.28 L620.92 194.27 L621.74 194.26 L622.57 194.25 L623.39 194.24 L624.21 194.23 L625.04 194.22 L625.86 194.21 L626.68 194.20 L627.51 194.19 L628.33 194.18 L629.16 194.17 L629.98 194.16 L630.80 194.16 L631.63 194.15 L632.45 194.14 L633.27 194.14 L634.10 194.13 L634.92 194.12 L635.75 194.12 L636.57 194.11 L637.39 194.11 L638.22 194.10 L639.04 194.10 L639.86 194.09 L640.69 194.09 L641.51 194.09 L642.34 194.08 L643.16 194.08 L643.98 194.08 L644.81 194.07 L645.63 194.07 L646.45 194.07 L647.28 194.06 L648.10 194.06 L648.93 194.06 L649.75 194.05 L650.57 194.05 L651.40 194.05 L652.22 194.05 L653.04 194.05 L653.87 194.04 L654.69 194.04 L655.52 194.04 L656.34 194.04 L657.16 194.04 L657.99 194.03 L658.81 194.03 L659.63 194.03 L660.46 194.03 L661.28 194.03 L662.11 194.03 L662.93 194.03 L663.75 194.03 L664.58 194.02 L665.40 194.02 L666.22 194.02 L667.05 194.02 L667.87 194.02 L668.70 194.02 L669.52 194.02 L670.34 194.02 L671.17 194.02 L671.99 194.02 L672.81 194.02 L673.64 194.01 L674.46 194.01 L675.29 194.01 L676.11 194.01 L676.93 194.01 L677.76 194.01 L678.58 194.01 L679.41 194.01 L680.23 194.01 L681.05 194.01 L681.88 194.01 L682.70 194.01 L683.52 194.01 L684.35 194.01 L685.17 194.01 L686.00 194.01 L686.82 194.01 L687.64 194.01 L688.47 194.01 L689.29 194.01 L690.11 194.01 L690.94 194.01 L691.76 194.01 L692.59 194.01 L693.41 194.00 L694.23 194.00 L695.06 194.00 L695.88 194.00 L696.70 194.00 L697.53 194.00 L698.35 194.00 L699.18 194.00 L700.00 194.00 L700.82 194.00 L701.65 194.00 L702.47 194.00 L703.29 194.00 L704.12 194.00 L704.94 194.00 L705.77 194.00 L706.59 194.00 L707.41 194.00 L708.24 194.00 L709.06 194.00 L709.88 194.00 L710.71 194.00 L711.53 194.00 L712.36 194.00 L713.18 194.00 L714.00 194.00 L714.83 194.00 L715.65 194.00 L716.47 194.00 L717.30 194.00 L718.12 194.00 L718.95 194.00 L719.77 194.00 L720.59 194.00 L721.42 194.00 L722.24 194.00 L723.06 194.00 L723.89 194.00 L724.71 194.00 L725.54 194.00 L726.36 194.00 L727.18 194.00 L728.01 194.00 L728.83 194.00 L729.65 194.00 L730.48 194.00 L731.30 194.00 L732.13 194.00 L732.95 194.00 L733.77 194.00 L734.60 194.00 L735.42 194.00 L736.24 194.00 L737.07 194.00 L737.89 194.00 L738.72 194.00 L739.54 194.00 L740.36 194.00 L741.19 194.00 L742.01 194.00 L742.83 194.00 L743.66 194.00 L744.48 194.00 L745.31 194.00 L746.13 194.00 L746.95 194.00 L747.78 194.00 L748.60 194.00 L749.42 194.00 L750.25 194.00 L751.07 194.00 L751.90 194.00 L752.72 194.00 L753.54 194.00 L754.37 194.00 L755.19 194.00 L756.02 194.00 L756.84 194.00 L757.66 194.00 L758.49 194.00 L759.31 194.00 L760.13 194.00 L760.96 194.00 L761.78 194.00 L762.61 194.00 L763.43 194.00 L764.25 194.00 L765.08 194.00 L765.90 194.00 L766.72 194.00 L767.55 194.00 L768.37 194.00 L769.20 194.00 L770.02 194.00 L770.84 194.00 L771.67 194.00 L772.49 194.00 L773.31 194.00 L774.14 194.00 L774.96 194.00 L775.79 194.00 L776.61 194.00 L777.43 194.00 L778.26 194.00 L779.08 194.00 L779.90 194.00 L780.73 194.00 L781.55 194.00 L782.38 194.00 L783.20 194.00 L784.02 194.00 L784.85 194.00 L785.67 194.00 L786.49 194.00 L787.32 194.00 L788.14 194.00 L788.97 194.00 L789.79 194.00 L790.61 194.00 L791.44 194.00 L792.26 194.00 L793.08 194.00 L793.91 194.00 L794.73 194.00 L795.56 194.00 L796.38 194.00 L797.20 194.00 L798.03 194.00 L798.85 194.00 L799.67 194.00 L800.50 194.00 L801.32 194.00 L802.15 194.00 L802.97 194.00 L803.79 194.00 L804.62 194.00 L805.44 194.00 L806.26 194.00 L807.09 194.00 L807.91 194.00 L808.74 194.00 L809.56 194.00 L810.38 194.00 L811.21 194.00 L812.03 194.00 L812.85 194.00 L813.68 194.00 L814.50 194.00 L815.33 194.00 L816.15 194.00 L816.97 194.00 L817.80 194.00 L818.62 194.00 L819.44 194.00 L820.27 194.00 L821.09 194.00 L821.92 194.00 L822.74 194.00 L823.56 194.00 L824.39 194.00 L825.21 194.00 L826.03 194.00 L826.86 194.00 L827.68 194.00 L828.51 194.00 L829.33 194.00 L830.15 194.00 L830.98 194.00 L831.80 194.00 L832.63 194.00 L833.45 194.00 L834.27 194.00 L835.10 194.00 L835.92 194.00 L836.74 194.00 L837.57 194.00 L838.39 194.00 L839.22 194.00 L840.04 194.00 L840.86 194.00 L841.69 194.00 L842.51 194.00 L843.33 194.00 L844.16 194.00 L844.98 194.00 L845.81 194.00 L846.63 194.00 L847.45 194.00 L848.28 194.00 L849.10 194.00 L849.92 194.00 L850.75 194.00 L851.57 194.00 L852.40 194.00 L853.22 194.00 L854.04 194.00 L854.87 194.00 L855.69 194.00 L856.51 194.00 L857.34 194.00 L858.16 194.00 L858.99 194.00 L859.81 194.00 L860.63 194.00 L861.46 194.00 L862.28 194.00 L863.10 194.00 L863.93 194.00 L864.75 194.00 L865.58 194.00 L866.40 194.00" fill="none" stroke="#008000" stroke-width="2" shape-rendering="crispEdges"/><path d="M43.46 609.08 L44.28 608.09 L45.11 607.11 L45.93 606.13 L46.76 605.16 L47.58 604.19 L48.40 603.23 L49.23 602.27 L50.05 601.31 L50.87 600.36 L51.70 599.42 L52.52 598.48 L53.35 597.55 L54.17 596.62 L54.99 595.69 L55.82 594.77 L56.64 593.86 L57.46 592.95 L58.29 592.04 L59.11 591.14 L59.94 590.25 L60.76 589.36 L61.58 588.47 L62.41 587.59 L63.23 586.71 L64.05 585.84 L64.88 584.97 L65.70 584.10 L66.53 583.24 L67.35 582.38 L68.17 581.53 L69.00 580.68 L69.82 579.84 L70.64 579.00 L71.47 578.16 L72.29 577.33 L73.12 576.50 L73.94 575.68 L74.76 574.86 L75.59 574.04 L76.41 573.23 L77.23 572.42 L78.06 571.61 L78.88 570.81 L79.71 570.01 L80.53 569.21 L81.35 568.42 L82.18 567.63 L83.00 566.84 L83.82 566.06 L84.65 565.28 L85.47 564.50 L86.30 563.72 L87.12 562.95 L87.94 562.18 L88.77 561.42 L89.59 560.65 L90.41 559.89 L91.24 559.13 L92.06 558.38 L92.89 557.62 L93.71 556.87 L94.53 556.12 L95.36 555.37 L96.18 554.63 L97.00 553.89 L97.83 553.15 L98.65 552.41 L99.48 551.67 L100.30 550.94 L101.12 550.21 L101.95 549.48 L102.77 548.75 L103.59 548.02 L104.42 547.30 L105.24 546.58 L106.07 545.85 L106.89 545.14 L107.71 544.42 L108.54 543.70 L109.36 542.99 L110.18 542.27 L111.01 541.56 L111.83 540.85 L112.66 540.14 L113.48 539.43 L114.30 538.73 L115.13 538.02 L115.95 537.32 L116.77 536.62 L117.60 535.91 L118.42 535.21 L119.25 534.51 L120.07 533.82 L120.89 533.12 L121.72 532.42 L122.54 531.73 L123.37 531.03 L124.19 530.34 L125.01 529.65 L125.84 528.96 L126.66 528.27 L127.48 527.58 L128.31 526.89 L129.13 526.20 L129.96 525.51 L130.78 524.83 L131.60 524.14 L132.43 523.45 L133.25 522.77 L134.07 522.09 L134.90 521.40 L135.72 520.72 L136.55 520.04 L137.37 519.36 L138.19 518.68 L139.02 518.00 L139.84 517.32 L140.66 516.64 L141.49 515.96 L142.31 515.28 L143.14 514.61 L143.96 513.93 L144.78 513.25 L145.61 512.58 L146.43 511.90 L147.25 511.23 L148.08 510.55 L148.90 509.88 L149.73 509.20 L150.55 508.53 L151.37 507.86 L152.20 507.18 L153.02 506.51 L153.84 505.84 L154.67 505.17 L155.49 504.50 L156.32 503.83 L157.14 503.16 L157.96 502.48 L158.79 501.81 L159.61 501.14 L160.43 500.48 L161.26 499.81 L162.08 499.14 L162.91 498.47 L163.73 497.80 L164.55 497.13 L165.38 496.46 L166.20 495.79 L167.02 495.13 L167.85 494.46 L168.67 493.79 L169.50 493.12 L170.32 492.46 L171.14 491.79 L171.97 491.12 L172.79 490.46 L173.61 489.79 L174.44 489.13 L175.26 488.46 L176.09 487.79 L176.91 487.13 L177.73 486.46 L178.56 485.80 L179.38 485.13 L180.20 484.47 L181.03 483.80 L181.85 483.14 L182.68 482.47 L183.50 481.81 L184.32 481.14 L185.15 480.48 L185.97 479.81 L186.79 479.15 L187.62 478.49 L188.44 477.82 L189.27 477.16 L190.09 476.49 L190.91 475.83 L191.74 475.17 L192.56 474.50 L193.38 473.84 L194.21 473.18 L195.03 472.51 L195.86 471.85 L196.68 471.19 L197.50 470.52 L198.33 469.86 L199.15 469.20 L199.97 468.53 L200.80 467.87 L201.62 467.21 L202.45 466.55 L203.27 465.88 L204.09 465.22 L204.92 464.56 L205.74 463.90 L206.57 463.23 L207.39 462.57 L208.21 461.91 L209.04 461.25 L209.86 460.58 L210.68 459.92 L211.51 459.26 L212.33 458.60 L213.16 457.93 L213.98 457.27 L214.80 456.61 L215.63 455.95 L216.45 455.29 L217.27 454.62 L218.10 453.96 L218.92 453.30 L219.75 452.64 L220.57 451.98 L221.39 451.32 L222.22 450.65 L223.04 449.99 L223.86 449.33 L224.69 448.67 L225.51 448.01 L226.34 447.35 L227.16 446.68 L227.98 446.02 L228.81 445.36 L229.63 444.70 L230.45 444.04 L231.28 443.38 L232.10 442.71 L232.93 442.05 L233.75 441.39 L234.57 440.73 L235.40 440.07 L236.22 439.41 L237.04 438.75 L237.87 438.08 L238.69 437.42 L239.52 436.76 L240.34 436.10 L241.16 435.44 L241.99 434.78 L242.81 434.12 L243.63 433.46 L244.46 432.79 L245.28 432.13 L246.11 431.47 L246.93 430.81 L247.75 430.15 L248.58 429.49 L249.40 428.83 L250.22 428.17 L251.05 427.50 L251.87 426.84 L252.70 426.18 L253.52 425.52 L254.34 424.86 L255.17 424.20 L255.99 423.54 L256.81 422.88 L257.64 422.22 L258.46 421.56 L259.29 420.89 L260.11 420.23 L260.93 419.57 L261.76 418.91 L262.58 418.25 L263.40 417.59 L264.23 416.93 L265.05 416.27 L265.88 415.61 L266.70 414.94 L267.52 414.28 L268.35 413.62 L269.17 412.96 L269.99 412.30 L270.82 411.64 L271.64 410.98 L272.47 410.32 L273.29 409.66 L274.11 409.00 L274.94 408.34 L275.76 407.67 L276.58 407.01 L277.41 406.35 L278.23 405.69 L279.06 405.03 L279.88 404.37 L280.70 403.71 L281.53 403.05 L282.35 402.39 L283.18 401.73 L284.00 401.07 L284.82 400.40 L285.65 399.74 L286.47 399.08 L287.29 398.42 L288.12 397.76 L288.94 397.10 L289.77 396.44 L290.59 395.78 L291.41 395.12 L292.24 394.46 L293.06 393.80 L293.88 393.14 L294.71 392.47 L295.53 391.81 L296.36 391.15 L297.18 390.49 L298.00 389.83 L298.83 389.17 L299.65 388.51 L300.47 387.85 L301.30 387.19 L302.12 386.53 L302.95 385.87 L303.77 385.21 L304.59 384.55 L305.42 383.89 L306.24 383.22 L307.06 382.56 L307.89 381.90 L308.71 381.24 L309.54 380.58 L310.36 379.92 L311.18 379.26 L312.01 378.60 L312.83 377.94 L313.65 377.28 L314.48 376.62 L315.30 375.96 L316.13 375.30 L316.95 374.64 L317.77 373.98 L318.60 373.32 L319.42 372.65 L320.24 371.99 L321.07 371.33 L321.89 370.67 L322.72 370.01 L323.54 369.35 L324.36 368.69 L325.19 368.03 L326.01 367.37 L326.83 366.71 L327.66 366.05 L328.48 365.39 L329.31 364.73 L330.13 364.07 L330.95 363.41 L331.78 362.75 L332.60 362.09 L333.42 361.43 L334.25 360.77 L335.07 360.11 L335.90 359.45 L336.72 358.79 L337.54 358.13 L338.37 357.47 L339.19 356.81 L340.01 356.15 L340.84 355.49 L341.66 354.83 L342.49 354.17 L343.31 353.51 L344.13 352.85 L344.96 352.19 L345.78 351.53 L346.60 350.87 L347.43 350.21 L348.25 349.55 L349.08 348.89 L349.90 348.23 L350.72 347.57 L351.55 346.91 L352.37 346.25 L353.19 345.59 L354.02 344.93 L354.84 344.27 L355.67 343.61 L356.49 342.95 L357.31 342.29 L358.14 341.63 L358.96 340.97 L359.79 340.31 L360.61 339.65 L361.43 338.99 L362.26 338.33 L363.08 337.67 L363.90 337.02 L364.73 336.36 L365.55 335.70 L366.38 335.04 L367.20 334.38 L368.02 333.72 L368.85 333.06 L369.67 332.40 L370.49 331.74 L371.32 331.09 L372.14 330.43 L372.97 329.77 L373.79 329.11 L374.61 328.45 L375.44 327.79 L376.26 327.14 L377.08 326.48 L377.91 325.82 L378.73 325.16 L379.56 324.51 L380.38 323.85 L381.20 323.19 L382.03 322.53 L382.85 321.88 L383.67 321.22 L384.50 320.56 L385.32 319.90 L386.15 319.25 L386.97 318.59 L387.79 317.93 L388.62 317.28 L389.44 316.62 L390.26 315.97 L391.09 315.31 L391.91 314.65 L392.74 314.00 L393.56 313.34 L394.38 312.69 L395.21 312.03 L396.03 311.38 L396.85 310.72 L397.68 310.07 L398.50 309.41 L399.33 308.76 L400.15 308.10 L400.97 307.45 L401.80 306.80 L402.62 306.14 L403.44 305.49 L404.27 304.84 L405.09 304.18 L405.92 303.53 L406.74 302.88 L407.56 302.23 L408.39 301.58 L409.21 300.93 L410.03 300.27 L410.86 299.62 L411.68 298.97 L412.51 298.32 L413.33 297.67 L414.15 297.02 L414.98 296.37 L415.80 295.73 L416.62 295.08 L417.45 294.43 L418.27 293.78 L419.10 293.13 L419.92 292.49 L420.74 291.84 L421.57 291.20 L422.39 290.55 L423.21 289.90 L424.04 289.26 L424.86 288.62 L425.69 287.97 L426.51 287.33 L427.33 286.69 L428.16 286.05 L428.98 285.40 L429.80 284.76 L430.63 284.12 L431.45 283.48 L432.28 282.85 L433.10 282.21 L433.92 281.57 L434.75 280.93 L435.57 280.30 L436.39 279.66 L437.22 279.03 L438.04 278.39 L438.87 277.76 L439.69 277.13 L440.51 276.50 L441.34 275.87 L442.16 275.24 L442.99 274.61 L443.81 273.98 L444.63 273.36 L445.46 272.73 L446.28 272.11 L447.10 271.48 L447.93 270.86 L448.75 270.24 L449.58 269.62 L450.40 269.00 L451.22 268.39 L452.05 267.77 L452.87 267.16 L453.69 266.54 L454.52 265.93 L455.34 265.32 L456.17 264.71 L456.99 264.11 L457.81 263.50 L458.64 262.90 L459.46 262.29 L460.28 261.69 L461.11 261.09 L461.93 260.50 L462.76 259.90 L463.58 259.31 L464.40 258.72 L465.23 258.13 L466.05 257.54 L466.87 256.96 L467.70 256.38 L468.52 255.80 L469.35 255.22 L470.17 254.64 L470.99 254.07 L471.82 253.50 L472.64 252.93 L473.46 252.36 L474.29 251.80 L475.11 251.24 L475.94 250.69 L476.76 250.13 L477.58 249.58 L478.41 249.03 L479.23 248.49 L480.05 247.95 L480.88 247.41 L481.70 246.87 L482.53 246.34 L483.35 245.82 L484.17 245.29 L485.00 244.77 L485.82 244.26 L486.64 243.74 L487.47 243.24 L488.29 242.73 L489.12 242.23 L489.94 241.74 L490.76 241.25 L491.59 240.76 L492.41 240.28 L493.23 239.80 L494.06 239.33 L494.88 238.86 L495.71 238.40 L496.53 237.95 L497.35 237.50 L498.18 237.05 L499.00 236.61 L499.82 236.17 L500.65 235.75 L501.47 235.32 L502.30 234.91 L503.12 234.50 L503.94 234.09 L504.77 233.69 L505.59 233.30 L506.41 232.92 L507.24 232.54 L508.06 232.17 L508.89 231.80 L509.71 231.44 L510.53 231.09 L511.36 230.75 L512.18 230.41 L513.00 230.09 L513.83 229.76 L514.65 229.45 L515.48 229.15 L516.30 228.85 L517.12 228.56 L517.95 228.28 L518.77 228.01 L519.60 227.74 L520.42 227.49 L521.24 227.24 L522.07 227.00 L522.89 226.77 L523.71 226.55 L524.54 226.34 L525.36 226.14 L526.19 225.95 L527.01 225.76 L527.83 225.59 L528.66 225.42 L529.48 225.27 L530.30 225.12 L531.13 224.98 L531.95 224.86 L532.78 224.74 L533.60 224.63 L534.42 224.53 L535.25 224.45 L536.07 224.37 L536.89 224.30 L537.72 224.24 L538.54 224.19 L539.37 224.16 L540.19 224.13 L541.01 224.11 L541.84 224.10 L542.66 224.11 L543.48 224.12 L544.31 224.14 L545.13 224.17 L545.96 224.22 L546.78 224.27 L547.60 224.33 L548.43 224.40 L549.25 224.49 L550.07 224.58 L550.90 224.68 L551.72 224.79 L552.55 224.91 L553.37 225.05 L554.19 225.19 L555.02 225.34 L555.84 225.50 L556.66 225.67 L557.49 225.85 L558.31 226.03 L559.14 226.23 L559.96 226.44 L560.78 226.65 L561.61 226.88 L562.43 227.11 L563.25 227.36 L564.08 227.61 L564.90 227.87 L565.73 228.13 L566.55 228.41 L567.37 228.70 L568.20 228.99 L569.02 229.29 L569.84 229.60 L570.67 229.91 L571.49 230.24 L572.32 230.57 L573.14 230.91 L573.96 231.26 L574.79 231.61 L575.61 231.97 L576.43 232.34 L577.26 232.72 L578.08 233.10 L578.91 233.49 L579.73 233.88 L580.55 234.29 L581.38 234.69 L582.20 235.11 L583.02 235.53 L583.85 235.95 L584.67 236.39 L585.50 236.82 L586.32 237.27 L587.14 237.72 L587.97 238.17 L588.79 238.63 L589.61 239.10 L590.44 239.57 L591.26 240.04 L592.09 240.52 L592.91 241.01 L593.73 241.49 L594.56 241.99 L595.38 242.49 L596.21 242.99 L597.03 243.50 L597.85 244.01 L598.68 244.52 L599.50 245.04 L600.32 245.56 L601.15 246.09 L601.97 246.62 L602.80 247.15 L603.62 247.69 L604.44 248.23 L605.27 248.78 L606.09 249.32 L606.91 249.87 L607.74 250.43 L608.56 250.98 L609.39 251.54 L610.21 252.11 L611.03 252.67 L611.86 253.24 L612.68 253.81 L613.50 254.38 L614.33 254.96 L615.15 255.54 L615.98 256.12 L616.80 256.70 L617.62 257.29 L618.45 257.88 L619.27 258.47 L620.09 259.06 L620.92 259.65 L621.74 260.25 L622.57 260.84 L623.39 261.44 L624.21 262.05 L625.04 262.65 L625.86 263.25 L626.68 263.86 L627.51 264.47 L628.33 265.08 L629.16 265.69 L629.98 266.31 L630.80 266.92 L631.63 267.54 L632.45 268.15 L633.27 268.77 L634.10 269.39 L634.92 270.01 L635.75 270.64 L636.57 271.26 L637.39 271.89 L638.22 272.51 L639.04 273.14 L639.86 273.77 L640.69 274.40 L641.51 275.03 L642.34 275.66 L643.16 276.29 L643.98 276.93 L644.81 277.56 L645.63 278.20 L646.45 278.83 L647.28 279.47 L648.10 280.11 L648.93 280.75 L649.75 281.39 L650.57 282.03 L651.40 282.67 L652.22 283.31 L653.04 283.95 L653.87 284.60 L654.69 285.24 L655.52 285.89 L656.34 286.53 L657.16 287.18 L657.99 287.82 L658.81 288.47 L659.63 289.12 L660.46 289.77 L661.28 290.42 L662.11 291.07 L662.93 291.72 L663.75 292.37 L664.58 293.02 L665.40 293.67 L666.22 294.32 L667.05 294.97 L667.87 295.63 L668.70 296.28 L669.52 296.94 L670.34 297.59 L671.17 298.24 L671.99 298.90 L672.81 299.55 L673.64 300.21 L674.46 300.87 L675.29 301.52 L676.11 302.18 L676.93 302.84 L677.76 303.50 L678.58 304.15 L679.41 304.81 L680.23 305.47 L681.05 306.13 L681.88 306.79 L682.70 307.45 L683.52 308.11 L684.35 308.77 L685.17 309.43 L686.00 310.09 L686.82 310.75 L687.64 311.42 L688.47 312.08 L689.29 312.74 L690.11 313.40 L690.94 314.07 L691.76 314.73 L692.59 315.39 L693.41 316.06 L694.23 316.72 L695.06 317.38 L695.88 318.05 L696.70 318.71 L697.53 319.38 L698.35 320.04 L699.18 320.71 L700.00 321.37 L700.82 322.04 L701.65 322.71 L702.47 323.37 L703.29 324.04 L704.12 324.71 L704.94 325.37 L705.77 326.04 L706.59 326.71 L707.41 327.38 L708.24 328.05 L709.06 328.71 L709.88 329.38 L710.71 330.05 L711.53 330.72 L712.36 331.39 L713.18 332.06 L714.00 332.73 L714.83 333.40 L715.65 334.07 L716.47 334.74 L717.30 335.41 L718.12 336.08 L718.95 336.75 L719.77 337.43 L720.59 338.10 L721.42 338.77 L722.24 339.44 L723.06 340.12 L723.89 340.79 L724.71 341.46 L725.54 342.14 L726.36 342.81 L727.18 343.48 L728.01 344.16 L728.83 344.83 L729.65 345.51 L730.48 346.18 L731.30 346.86 L732.13 347.53 L732.95 348.21 L733.77 348.88 L734.60 349.56 L735.42 350.24 L736.24 350.91 L737.07 351.59 L737.89 352.27 L738.72 352.95 L739.54 353.63 L740.36 354.30 L741.19 354.98 L742.01 355.66 L742.83 356.34 L743.66 357.02 L744.48 357.70 L745.31 358.38 L746.13 359.06 L746.95 359.75 L747.78 360.43 L748.60 361.11 L749.42 361.79 L750.25 362.47 L751.07 363.16 L751.90 363.84 L752.72 364.52 L753.54 365.21 L754.37 365.89 L755.19 366.58 L756.02 367.26 L756.84 367.95 L757.66 368.64 L758.49 369.32 L759.31 370.01 L760.13 370.70 L760.96 371.39 L761.78 372.07 L762.61 372.76 L763.43 373.45 L764.25 374.14 L765.08 374.83 L765.90 375.52 L766.72 376.21 L767.55 376.91 L768.37 377.60 L769.20 378.29 L770.02 378.98 L770.84 379.68 L771.67 380.37 L772.49 381.07 L773.31 381.76 L774.14 382.46 L774.96 383.15 L775.79 383.85 L776.61 384.55 L777.43 385.25 L778.26 385.95 L779.08 386.65 L779.90 387.35 L780.73 388.05 L781.55 388.75 L782.38 389.45 L783.20 390.15 L784.02 390.86 L784.85 391.56 L785.67 392.27 L786.49 392.97 L787.32 393.68 L788.14 394.38 L788.97 395.09 L789.79 395.80 L790.61 396.51 L791.44 397.22 L792.26 397.93 L793.08 398.64 L793.91 399.35 L794.73 400.07 L795.56 400.78 L796.38 401.50 L797.20 402.21 L798.03 402.93 L798.85 403.65 L799.67 404.37 L800.50 405.09 L801.32 405.81 L802.15 406.53 L802.97 407.25 L803.79 407.97 L804.62 408.70 L805.44 409.42 L806.26 410.15 L807.09 410.88 L807.91 411.61 L808.74 412.34 L809.56 413.07 L810.38 413.80 L811.21 414.54 L812.03 415.27 L812.85 416.01 L813.68 416.74 L814.50 417.48 L815.33 418.22 L816.15 418.96 L816.97 419.71 L817.80 420.45 L818.62 421.19 L819.44 421.94 L820.27 422.69 L821.09 423.44 L821.92 424.19 L822.74 424.94 L823.56 425.70 L824.39 426.45 L825.21 427.21 L826.03 427.97 L826.86 428.73 L827.68 429.49 L828.51 430.25 L829.33 431.02 L830.15 431.79 L830.98 432.56 L831.80 433.33 L832.63 434.10 L833.45 434.87 L834.27 435.65 L835.10 436.43 L835.92 437.21 L836.74 437.99 L837.57 438.78 L838.39 439.57 L839.22 440.36 L840.04 441.15 L840.86 441.94 L841.69 442.74 L842.51 443.54 L843.33 444.34 L844.16 445.14 L844.98 445.95 L845.81 446.76 L846.63 447.57 L847.45 448.38 L848.28 449.20 L849.10 450.02 L849.92 450.84 L850.75 451.66 L851.57 452.49 L852.40 453.32 L853.22 454.16 L854.04 455.00 L854.87 455.84 L855.69 456.68 L856.51 457.53 L857.34 458.38 L858.16 459.23 L858.99 460.09 L859.81 460.95 L860.63 461.82 L861.46 462.68 L862.28 463.56 L863.10 464.43 L863.93 465.31 L864.75 466.20 L865.58 467.09 L866.40 467.98" fill="none" stroke="#0000ff" stroke-width="2" shape-rendering="crispEdges"/><path d="M43.46 608.33 L44.28 607.34 L45.11 606.36 L45.93 605.38 L46.76 604.41 L47.58 603.44 L48.40 602.48 L49.23 601.52 L50.05 600.56 L50.87 599.61 L51.70 598.67 L52.52 597.73 L53.35 596.80 L54.17 595.87 L54.99 594.94 L55.82 594.02 L56.64 593.11 L57.46 592.20 L58.29 591.29 L59.11 590.39 L59.94 589.50 L60.76 588.61 L61.58 587.72 L62.41 586.84 L63.23 585.96 L64.05 585.09 L64.88 584.22 L65.70 583.35 L66.53 582.49 L67.35 581.63 L68.17 580.78 L69.00 579.93 L69.82 579.09 L70.64 578.25 L71.47 577.41 L72.29 576.58 L73.12 575.75 L73.94 574.93 L74.76 574.11 L75.59 573.29 L76.41 572.48 L77.23 571.67 L78.06 570.86 L78.88 570.06 L79.71 569.26 L80.53 568.46 L81.35 567.67 L82.18 566.88 L83.00 566.09 L83.82 565.31 L84.65 564.53 L85.47 563.75 L86.30 562.97 L87.12 562.20 L87.94 561.43 L88.77 560.67 L89.59 559.90 L90.41 559.14 L91.24 558.38 L92.06 557.63 L92.89 556.87 L93.71 556.12 L94.53 555.37 L95.36 554.62 L96.18 553.88 L97.00 553.14 L97.83 552.40 L98.65 551.66 L99.48 550.92 L100.30 550.19 L101.12 549.46 L101.95 548.73 L102.77 548.00 L103.59 547.27 L104.42 546.55 L105.24 545.83 L106.07 545.10 L106.89 544.39 L107.71 543.67 L108.54 542.95 L109.36 542.24 L110.18 541.52 L111.01 540.81 L111.83 540.10 L112.66 539.39 L113.48 538.68 L114.30 537.98 L115.13 537.27 L115.95 536.57 L116.77 535.87 L117.60 535.16 L118.42 534.46 L119.25 533.76 L120.07 533.07 L120.89 532.37 L121.72 531.67 L122.54 530.98 L123.37 530.28 L124.19 529.59 L125.01 528.90 L125.84 528.21 L126.66 527.52 L127.48 526.83 L128.31 526.14 L129.13 525.45 L129.96 524.76 L130.78 524.08 L131.60 523.39 L132.43 522.70 L133.25 522.02 L134.07 521.34 L134.90 520.65 L135.72 519.97 L136.55 519.29 L137.37 518.61 L138.19 517.93 L139.02 517.25 L139.84 516.57 L140.66 515.89 L141.49 515.21 L142.31 514.53 L143.14 513.86 L143.96 513.18 L144.78 512.50 L145.61 511.83 L146.43 511.15 L147.25 510.48 L148.08 509.80 L148.90 509.13 L149.73 508.45 L150.55 507.78 L151.37 507.11 L152.20 506.43 L153.02 505.76 L153.84 505.09 L154.67 504.42 L155.49 503.75 L156.32 503.08 L157.14 502.41 L157.96 501.73 L158.79 501.06 L159.61 500.39 L160.43 499.73 L161.26 499.06 L162.08 498.39 L162.91 497.72 L163.73 497.05 L164.55 496.38 L165.38 495.71 L166.20 495.04 L167.02 494.38 L167.85 493.71 L168.67 493.04 L169.50 492.37 L170.32 491.71 L171.14 491.04 L171.97 490.37 L172.79 489.71 L173.61 489.04 L174.44 488.38 L175.26 487.71 L176.09 487.04 L176.91 486.38 L177.73 485.71 L178.56 485.05 L179.38 484.38 L180.20 483.72 L181.03 483.05 L181.85 482.39 L182.68 481.72 L183.50 481.06 L184.32 480.39 L185.15 479.73 L185.97 479.06 L186.79 478.40 L187.62 477.74 L188.44 477.07 L189.27 476.41 L190.09 475.74 L190.91 475.08 L191.74 474.42 L192.56 473.75 L193.38 473.09 L194.21 472.43 L195.03 471.76 L195.86 471.10 L196.68 470.44 L197.50 469.77 L198.33 469.11 L199.15 468.45 L199.97 467.78 L200.80 467.12 L201.62 466.46 L202.45 465.80 L203.27 465.13 L204.09 464.47 L204.92 463.81 L205.74 463.15 L206.57 462.48 L207.39 461.82 L208.21 461.16 L209.04 460.50 L209.86 459.83 L210.68 459.17 L211.51 458.51 L212.33 457.85 L213.16 457.18 L213.98 456.52 L214.80 455.86 L215.63 455.20 L216.45 454.54 L217.27 453.87 L218.10 453.21 L218.92 452.55 L219.75 451.89 L220.57 451.23 L221.39 450.57 L222.22 449.90 L223.04 449.24 L223.86 448.58 L224.69 447.92 L225.51 447.26 L226.34 446.60 L227.16 445.93 L227.98 445.27 L228.81 444.61 L229.63 443.95 L230.45 443.29 L231.28 442.63 L232.10 441.96 L232.93 441.30 L233.75 440.64 L234.57 439.98 L235.40 439.32 L236.22 438.66 L237.04 438.00 L237.87 437.33 L238.69 436.67 L239.52 436.01 L240.34 435.35 L241.16 434.69 L241.99 434.03 L242.81 433.37 L243.63 432.71 L244.46 432.04 L245.28 431.38 L246.11 430.72 L246.93 430.06 L247.75 429.40 L248.58 428.74 L249.40 428.08 L250.22 427.42 L251.05 426.75 L251.87 426.09 L252.70 425.43 L253.52 424.77 L254.34 424.11 L255.17 423.45 L255.99 422.79 L256.81 422.13 L257.64 421.47 L258.46 420.81 L259.29 420.14 L260.11 419.48 L260.93 418.82 L261.76 418.16 L262.58 417.50 L263.40 416.84 L264.23 416.18 L265.05 415.52 L265.88 414.86 L266.70 414.19 L267.52 413.53 L268.35 412.87 L269.17 412.21 L269.99 411.55 L270.82 410.89 L271.64 410.23 L272.47 409.57 L273.29 408.91 L274.11 408.25 L274.94 407.59 L275.76 406.92 L276.58 406.26 L277.41 405.60 L278.23 404.94 L279.06 404.28 L279.88 403.62 L280.70 402.96 L281.53 402.30 L282.35 401.64 L283.18 400.98 L284.00 400.32 L284.82 399.65 L285.65 398.99 L286.47 398.33 L287.29 397.67 L288.12 397.01 L288.94 396.35 L289.77 395.69 L290.59 395.03 L291.41 394.37 L292.24 393.71 L293.06 393.05 L293.88 392.39 L294.71 391.72 L295.53 391.06 L296.36 390.40 L297.18 389.74 L298.00 389.08 L298.83 388.42 L299.65 387.76 L300.47 387.10 L301.30 386.44 L302.12 385.78 L302.95 385.12 L303.77 384.46 L304.59 383.80 L305.42 383.14 L306.24 382.47 L307.06 381.81 L307.89 381.15 L308.71 380.49 L309.54 379.83 L310.36 379.17 L311.18 378.51 L312.01 377.85 L312.83 377.19 L313.65 376.53 L314.48 375.87 L315.30 375.21 L316.13 374.55 L316.95 373.89 L317.77 373.23 L318.60 372.57 L319.42 371.90 L320.24 371.24 L321.07 370.58 L321.89 369.92 L322.72 369.26 L323.54 368.60 L324.36 367.94 L325.19 367.28 L326.01 366.62 L326.83 365.96 L327.66 365.30 L328.48 364.64 L329.31 363.98 L330.13 363.32 L330.95 362.66 L331.78 362.00 L332.60 361.34 L333.42 360.68 L334.25 360.02 L335.07 359.36 L335.90 358.70 L336.72 358.04 L337.54 357.38 L338.37 356.72 L339.19 356.06 L340.01 355.40 L340.84 354.74 L341.66 354.08 L342.49 353.42 L343.31 352.76 L344.13 352.10 L344.96 351.44 L345.78 350.78 L346.60 350.12 L347.43 349.46 L348.25 348.80 L349.08 348.14 L349.90 347.48 L350.72 346.82 L351.55 346.16 L352.37 345.50 L353.19 344.84 L354.02 344.18 L354.84 343.52 L355.67 342.86 L356.49 342.20 L357.31 341.54 L358.14 340.88 L358.96 340.22 L359.79 339.56 L360.61 338.90 L361.43 338.24 L362.26 337.58 L363.08 336.92 L363.90 336.27 L364.73 335.61 L365.55 334.95 L366.38 334.29 L367.20 333.63 L368.02 332.97 L368.85 332.31 L369.67 331.65 L370.49 330.99 L371.32 330.34 L372.14 329.68 L372.97 329.02 L373.79 328.36 L374.61 327.70 L375.44 327.04 L376.26 326.39 L377.08 325.73 L377.91 325.07 L378.73 324.41 L379.56 323.76 L380.38 323.10 L381.20 322.44 L382.03 321.78 L382.85 321.13 L383.67 320.47 L384.50 319.81 L385.32 319.15 L386.15 318.50 L386.97 317.84 L387.79 317.18 L388.62 316.53 L389.44 315.87 L390.26 315.22 L391.09 314.56 L391.91 313.90 L392.74 313.25 L393.56 312.59 L394.38 311.94 L395.21 311.28 L396.03 310.63 L396.85 309.97 L397.68 309.32 L398.50 308.66 L399.33 308.01 L400.15 307.35 L400.97 306.70 L401.80 306.05 L402.62 305.39 L403.44 304.74 L404.27 304.09 L405.09 303.43 L405.92 302.78 L406.74 302.13 L407.56 301.48 L408.39 300.83 L409.21 300.18 L410.03 299.52 L410.86 298.87 L411.68 298.22 L412.51 297.57 L413.33 296.92 L414.15 296.27 L414.98 295.62 L415.80 294.98 L416.62 294.33 L417.45 293.68 L418.27 293.03 L419.10 292.38 L419.92 291.74 L420.74 291.09 L421.57 290.45 L422.39 289.80 L423.21 289.15 L424.04 288.51 L424.86 287.87 L425.69 287.22 L426.51 286.58 L427.33 285.94 L428.16 285.30 L428.98 284.65 L429.80 284.01 L430.63 283.37 L431.45 282.73 L432.28 282.10 L433.10 281.46 L433.92 280.82 L434.75 280.18 L435.57 279.55 L436.39 278.91 L437.22 278.28 L438.04 277.64 L438.87 277.01 L439.69 276.38 L440.51 275.75 L441.34 275.12 L442.16 274.49 L442.99 271.90 L443.81 271.25 L444.63 270.61 L445.46 269.98 L446.28 269.35 L447.10 268.73 L447.93 268.11 L448.75 267.50 L449.58 266.89 L450.40 266.28 L451.22 265.68 L452.05 265.08 L452.87 264.48 L453.69 263.89 L454.52 263.30 L455.34 262.71 L456.17 262.12 L456.99 261.54 L457.81 260.95 L458.64 260.37 L459.46 259.79 L460.28 259.22 L461.11 258.64 L461.93 258.06 L462.76 257.48 L463.58 256.91 L464.40 256.33 L465.23 255.75 L466.05 255.18 L466.87 254.60 L467.70 254.02 L468.52 253.44 L469.35 252.86 L470.17 252.28 L470.99 251.70 L471.82 251.12 L472.64 250.54 L473.46 249.97 L474.29 249.39 L475.11 248.82 L475.94 248.24 L476.76 247.67 L477.58 247.11 L478.41 246.54 L479.23 245.98 L480.05 245.42 L480.88 244.86 L481.70 244.31 L482.53 243.76 L483.35 243.21 L484.17 242.67 L485.00 242.13 L485.82 241.60 L486.64 241.07 L487.47 240.55 L488.29 240.03 L489.12 239.53 L489.94 239.02 L490.76 238.53 L491.59 238.04 L492.41 237.55 L493.23 237.07 L494.06 236.59 L494.88 236.10 L495.71 235.62 L496.53 235.14 L497.35 234.66 L498.18 234.18 L499.00 233.70 L499.82 233.21 L500.65 232.71 L501.47 232.22 L502.30 231.71 L503.12 231.20 L503.94 230.68 L504.77 230.16 L505.59 229.62 L506.41 229.07 L507.24 228.52 L508.06 227.97 L508.89 227.41 L509.71 226.85 L510.53 226.29 L511.36 225.73 L512.18 225.17 L513.00 224.62 L513.83 224.07 L514.65 223.53 L515.48 223.00 L516.30 222.48 L517.12 221.97 L517.95 221.47 L518.77 220.98 L519.60 220.50 L520.42 220.03 L521.24 219.55 L522.07 219.09 L522.89 218.63 L523.71 218.17 L524.54 217.72 L525.36 217.28 L526.19 216.84 L527.01 216.40 L527.83 215.96 L528.66 215.53 L529.48 215.10 L530.30 214.68 L531.13 214.25 L531.95 213.82 L532.78 213.39 L533.60 212.95 L534.42 212.51 L535.25 212.08 L536.07 211.65 L536.89 211.23 L537.72 210.82 L538.54 210.43 L539.37 210.06 L540.19 209.71 L541.01 209.38 L541.84 209.08 L542.66 208.80 L543.48 208.52 L544.31 208.25 L545.13 207.98 L545.96 207.72 L546.78 207.45 L547.60 207.19 L548.43 206.94 L549.25 206.68 L550.07 206.43 L550.90 206.18 L551.72 205.94 L552.55 205.70 L553.37 205.46 L554.19 205.22 L555.02 204.99 L555.84 204.76 L556.66 204.53 L557.49 204.31 L558.31 204.09 L559.14 203.87 L559.96 203.66 L560.78 203.45 L561.61 203.24 L562.43 203.04 L563.25 202.84 L564.08 202.64 L564.90 202.45 L565.73 202.26 L566.55 202.08 L567.37 201.89 L568.20 201.71 L569.02 201.54 L569.84 201.37 L570.67 201.20 L571.49 201.03 L572.32 200.87 L573.14 200.71 L573.96 200.56 L574.79 200.41 L575.61 200.26 L576.43 200.12 L577.26 199.98 L578.08 199.85 L578.91 199.72 L579.73 199.59 L580.55 199.46 L581.38 199.34 L582.20 199.23 L583.02 199.12 L583.85 199.01 L584.67 198.90 L585.50 198.80 L586.32 198.71 L587.14 198.61 L587.97 198.52 L588.79 198.43 L589.61 198.33 L590.44 198.24 L591.26 198.15 L592.09 198.07 L592.91 197.98 L593.73 197.89 L594.56 197.81 L595.38 197.73 L596.21 197.65 L597.03 197.57 L597.85 197.49 L598.68 197.41 L599.50 197.34 L600.32 197.26 L601.15 197.19 L601.97 197.12 L602.80 197.06 L603.62 196.99 L604.44 196.93 L605.27 196.87 L606.09 196.81 L606.91 196.75 L607.74 196.70 L608.56 196.65 L609.39 196.60 L610.21 196.55 L611.03 196.50 L611.86 196.46 L612.68 196.42 L613.50 196.38 L614.33 196.35 L615.15 196.32 L615.98 196.29 L616.80 196.26 L617.62 196.23 L618.45 196.21 L619.27 196.19 L620.09 196.16 L620.92 196.14 L621.74 196.12 L622.57 196.10 L623.39 196.07 L624.21 196.05 L625.04 196.03 L625.86 196.01 L626.68 195.99 L627.51 195.97 L628.33 195.95 L629.16 195.93 L629.98 195.91 L630.80 195.89 L631.63 195.87 L632.45 195.85 L633.27 195.83 L634.10 195.81 L634.92 195.80 L635.75 195.78 L636.57 195.76 L637.39 195.75 L638.22 195.73 L639.04 195.71 L639.86 195.70 L640.69 195.69 L641.51 195.67 L642.34 195.66 L643.16 195.65 L643.98 195.63 L644.81 195.62 L645.63 195.61 L646.45 195.60 L647.28 195.59 L648.10 195.58 L648.93 195.57 L649.75 195.56 L650.57 195.55 L651.40 195.54 L652.22 195.54 L653.04 195.53 L653.87 195.52 L654.69 195.52 L655.52 195.51 L656.34 195.51 L657.16 195.51 L657.99 195.50 L658.81 195.50 L659.63 195.50 L660.46 195.50 L661.28 195.50 L662.11 195.50 L662.93 195.50 L663.75 195.50 L664.58 195.50 L665.40 195.50 L666.22 195.50 L667.05 195.50 L667.87 195.50 L668.70 195.50 L669.52 195.50 L670.34 195.50 L671.17 195.50 L671.99 195.50 L672.81 195.50 L673.64 195.50 L674.46 195.50 L675.29 195.50 L676.11 195.50 L676.93 195.50 L677.76 195.50 L678.58 195.50 L679.41 195.50 L680.23 195.50 L681.05 195.50 L681.88 195.50 L682.70 195.50 L683.52 195.50 L684.35 195.50 L685.17 195.50 L686.00 195.50 L686.82 195.50 L687.64 195.50 L688.47 195.50 L689.29 195.50 L690.11 195.50 L690.94 195.50 L691.76 195.50 L692.59 195.50 L693.41 195.50 L694.23 195.50 L695.06 195.50 L695.88 195.50 L696.70 195.50 L697.53 195.50 L698.35 195.50 L699.18 195.50 L700.00 195.50 L700.82 195.50 L701.65 195.50 L702.47 195.50 L703.29 195.50 L704.12 195.50 L704.94 195.50 L705.77 195.50 L706.59 195.50 L707.41 195.50 L708.24 195.50 L709.06 195.50 L709.88 195.50 L710.71 195.50 L711.53 195.50 L712.36 195.50 L713.18 195.50 L714.00 195.50 L714.83 195.50 L715.65 195.50 L716.47 195.50 L717.30 195.50 L718.12 195.50 L718.95 193.75 L719.77 193.75 L720.59 193.75 L721.42 193.75 L722.24 193.75 L723.06 193.75 L723.89 193.75 L724.71 193.75 L725.54 193.75 L726.36 193.75 L727.18 193.75 L728.01 193.75 L728.83 193.75 L729.65 193.75 L730.48 193.75 L731.30 193.75 L732.13 193.75 L732.95 193.75 L733.77 193.75 L734.60 193.75 L735.42 193.75 L736.24 193.75 L737.07 193.75 L737.89 193.75 L738.72 193.75 L739.54 193.75 L740.36 193.75 L741.19 193.75 L742.01 193.75 L742.83 193.75 L743.66 193.75 L744.48 193.75 L745.31 193.75 L746.13 193.75 L746.95 193.75 L747.78 193.75 L748.60 193.75 L749.42 193.75 L750.25 193.75 L751.07 193.75 L751.90 193.75 L752.72 193.75 L753.54 193.75 L754.37 193.75 L755.19 193.75 L756.02 193.75 L756.84 193.75 L757.66 193.75 L758.49 193.75 L759.31 193.75 L760.13 193.75 L760.96 193.75 L761.78 193.75 L762.61 193.75 L763.43 193.75 L764.25 193.75 L765.08 193.75 L765.90 193.75 L766.72 193.75 L767.55 193.75 L768.37 193.75 L769.20 193.75 L770.02 193.75 L770.84 193.75 L771.67 193.75 L772.49 193.75 L773.31 193.75 L774.14 193.75 L774.96 193.75 L775.79 193.75 L776.61 193.75 L777.43 193.75 L778.26 193.75 L779.08 193.75 L779.90 193.75 L780.73 193.75 L781.55 193.75 L782.38 193.75 L783.20 193.75 L784.02 193.75 L784.85 193.75 L785.67 193.75 L786.49 193.75 L787.32 193.75 L788.14 193.75 L788.97 193.75 L789.79 193.75 L790.61 193.75 L791.44 193.75 L792.26 193.75 L793.08 193.75 L793.91 193.75 L794.73 193.75 L795.56 193.75 L796.38 193.75 L797.20 193.75 L798.03 193.75 L798.85 193.75 L799.67 193.75 L800.50 193.75 L801.32 193.75 L802.15 193.75 L802.97 193.75 L803.79 193.75 L804.62 193.75 L805.44 193.75 L806.26 193.75 L807.09 193.75 L807.91 193.75 L808.74 193.75 L809.56 193.75 L810.38 193.75 L811.21 193.75 L812.03 193.75 L812.85 193.75 L813.68 193.75 L814.50 193.75 L815.33 193.75 L816.15 193.75 L816.97 193.75 L817.80 193.75 L818.62 193.75 L819.44 193.75 L820.27 193.75 L821.09 193.75 L821.92 193.75 L822.74 193.75 L823.56 193.75 L824.39 193.75 L825.21 193.75 L826.03 193.75 L826.86 193.75 L827.68 193.75 L828.51 193.75 L829.33 193.75 L830.15 193.75 L830.98 193.75 L831.80 193.75 L832.63 193.75 L833.45 193.75 L834.27 193.75 L835.10 193.75 L835.92 193.75 L836.74 193.75 L837.57 193.75 L838.39 193.75 L839.22 193.75 L840.04 193.75 L840.86 193.75 L841.69 193.75 L842.51 193.75 L843.33 193.75 L844.16 193.75 L844.98 193.75 L845.81 193.75 L846.63 193.75 L847.45 193.75 L848.28 193.75 L849.10 193.75 L849.92 193.75 L850.75 193.75 L851.57 193.75 L852.40 193.75 L853.22 193.75 L854.04 193.75 L854.87 193.75 L855.69 193.75 L856.51 193.75 L857.34 193.75 L858.16 193.75 L858.99 193.75 L859.81 193.75 L860.63 193.75 L861.46 193.75 L862.28 193.75 L863.10 193.75 L863.93 193.75 L864.75 193.75 L865.58 193.75 L866.40 193.75" fill="none" stroke="#cc1a9a" stroke-width="2" shape-rendering="crispEdges"/><line x1="44" y1="194.5" x2="869" y2="194.5" stroke="#000" stroke-width="1"/></g></svg>
<div class="t" style="left:4px;width:40px;text-align:center;top:88.5px;font-size:11px;line-height:11px">20</div>
<div class="t" style="left:4px;width:40px;text-align:center;top:113.5px;font-size:11px;line-height:11px">15</div>
<div class="t" style="left:4px;width:40px;text-align:center;top:138.5px;font-size:11px;line-height:11px">10</div>
<div class="t" style="left:4px;width:40px;text-align:center;top:163.5px;font-size:11px;line-height:11px">5</div>
<div class="t" style="left:4px;width:40px;text-align:center;top:188.5px;font-size:11px;line-height:11px">0</div>
<div class="t" style="left:4px;width:40px;text-align:center;top:213.5px;font-size:11px;line-height:11px">-5</div>
<div class="t" style="left:4px;width:40px;text-align:center;top:238.5px;font-size:11px;line-height:11px">-10</div>
<div class="t" style="left:4px;width:40px;text-align:center;top:263.5px;font-size:11px;line-height:11px">-15</div>
<div class="t" style="left:4px;width:40px;text-align:center;top:288.5px;font-size:11px;line-height:11px">-20</div>
<div class="t" style="left:4px;width:40px;text-align:center;top:313.5px;font-size:11px;line-height:11px">-25</div>
<div class="t" style="left:4px;width:40px;text-align:center;top:338.5px;font-size:11px;line-height:11px">-30</div>
<div class="t" style="left:4px;width:40px;text-align:center;top:363.5px;font-size:11px;line-height:11px">-35</div>
<div class="t" style="left:4px;width:40px;text-align:center;top:388.5px;font-size:11px;line-height:11px">-40</div>
<div class="t" style="left:880px;top:90.5px;font-size:11px;line-height:11px;color:#4682b4">180</div>
<div class="t" style="left:880px;top:127.6px;font-size:11px;line-height:11px;color:#4682b4">135</div>
<div class="t" style="left:880px;top:164.6px;font-size:11px;line-height:11px;color:#4682b4">90</div>
<div class="t" style="left:880px;top:201.6px;font-size:11px;line-height:11px;color:#4682b4">45</div>
<div class="t" style="left:880px;top:238.7px;font-size:11px;line-height:11px;color:#4682b4">0</div>
<div class="t" style="left:880px;top:275.8px;font-size:11px;line-height:11px;color:#4682b4">-45</div>
<div class="t" style="left:880px;top:312.8px;font-size:11px;line-height:11px;color:#4682b4">-90</div>
<div class="t" style="left:880px;top:349.8px;font-size:11px;line-height:11px;color:#4682b4">-135</div>
<div class="t" style="left:880px;top:386.9px;font-size:11px;line-height:11px;color:#4682b4">-180</div>
<div class="t" style="left:37px;top:395px;font-size:11px;line-height:11px;color:#3c5560">10</div>
<div class="t" style="left:112px;top:395px;font-size:11px;line-height:11px;color:#3c5560">20</div>
<div class="t" style="left:211px;top:395px;font-size:11px;line-height:11px;color:#3c5560">50</div>
<div class="t" style="left:283px;top:395px;font-size:11px;line-height:11px;color:#3c5560">100</div>
<div class="t" style="left:357px;top:395px;font-size:11px;line-height:11px;color:#3c5560">200</div>
<div class="t" style="left:457px;top:395px;font-size:11px;line-height:11px;color:#3c5560">500</div>
<div class="t" style="left:529px;top:395px;font-size:11px;line-height:11px;color:#3c5560">1kHz</div>
<div class="t" style="left:603px;top:395px;font-size:11px;line-height:11px;color:#3c5560">2kHz</div>
<div class="t" style="left:702px;top:395px;font-size:11px;line-height:11px;color:#3c5560">5kHz</div>
<div class="t" style="left:775px;top:395px;font-size:11px;line-height:11px;color:#3c5560">10kHz</div>
<div class="t" style="left:850px;top:395px;font-size:11px;line-height:11px;color:#3c5560">20kHz</div>
<div class="combo" style="left:4px;top:408px;width:70px;height:21px"><div class="y" style="right:18px"></div><div class="b" style="width:16px"><svg class="a" style="left:0;top:0" width="16" height="19"><path d="M5.5 7.7 L11.5 7.7 L8.5 11.5 Z" fill="#000"/></svg></div><div class="t" style="left:2px;top:4px;font-size:12px;letter-spacing:-0.70px">10Hz</div></div>
<div class="combo" style="left:845px;top:408px;width:70px;height:21px"><div class="y" style="right:18px"></div><div class="b" style="width:16px"><svg class="a" style="left:0;top:0" width="16" height="19"><path d="M5.5 7.7 L11.5 7.7 L8.5 11.5 Z" fill="#000"/></svg></div><div class="t" style="left:3px;top:4px;font-size:12px;letter-spacing:-0.70px">20kHz</div></div>
<div class="grp" style="left:4px;top:430px;width:300px;height:230px"></div>
<div class="grp" style="left:305px;top:430px;width:301px;height:230px"></div>
<div class="grp" style="left:608px;top:430px;width:303px;height:230px"></div>
<div class="t" style="left:12px;top:436px;font-size:17px;letter-spacing:-0.8px;color:#ff0000">Low</div>
<div class="lbl" style="left:88px;top:439px">Freq</div>
<div class="lbl" style="left:173px;top:439px">Type</div>
<div class="a" style="left:63px;top:460px;width:75px;height:23px;background:#2d2d21;border:1px solid #a4a7b6"><div class="t" style="left:0;top:1.5px;width:57px;text-align:center;font-size:14px;letter-spacing:-0.8px;color:#f3e9b8">500</div><svg class="a" style="left:57px;top:0" width="16" height="20"><rect x="0" y="0" width="16" height="20" fill="#fff"/><rect x="1.5" y="1.5" width="13" height="8" fill="#efefef" stroke="#c6c6c6"/><rect x="1.5" y="10.5" width="13" height="8" fill="#efefef" stroke="#c6c6c6"/><path d="M5 7.3 L10.5 7.3 L7.75 4.3 Z" fill="#000"/><path d="M5 13.5 L10.5 13.5 L7.75 16.5 Z" fill="#000"/></svg></div>
<div class="ddl" style="left:152px;top:460px;width:116px;height:24px;background:#e1e1e1;border-color:#adadad"><div class="t" style="left:3px;top:4.4px;color:#000;letter-spacing:-0.7px">Butterw 24</div><svg class="a" style="left:101px;top:9px" width="10" height="7"><path d="M1.4 1L5.1 4.7L8.8 1" fill="none" stroke="#333" stroke-width="1.3"/></svg></div>
<div class="lbl" style="left:64px;top:520px">Gain</div>
<div class="lbl" style="left:158px;top:520px">Inv</div>
<div class="lbl" style="left:194px;top:520px">Délai</div>
<div class="a" style="left:63px;top:537px;width:75px;height:23px;background:#2d2d21;border:1px solid #a4a7b6"><div class="t" style="left:0;top:1.5px;width:57px;text-align:center;font-size:14px;letter-spacing:-0.8px;color:#f3e9b8">0,00</div><svg class="a" style="left:57px;top:0" width="16" height="20"><rect x="0" y="0" width="16" height="20" fill="#fff"/><rect x="1.5" y="1.5" width="13" height="8" fill="#efefef" stroke="#c6c6c6"/><rect x="1.5" y="10.5" width="13" height="8" fill="#efefef" stroke="#c6c6c6"/><path d="M5 7.3 L10.5 7.3 L7.75 4.3 Z" fill="#000"/><path d="M5 13.5 L10.5 13.5 L7.75 16.5 Z" fill="#000"/></svg></div>
<div class="cb" style="left:158px;top:539px;width:13px;height:13px"></div>
<div class="a" style="left:194px;top:537px;width:50px;height:23px;background:#2d2d21;border:1px solid #a4a7b6"><div class="t" style="left:0;top:1.5px;width:32px;text-align:center;font-size:14px;letter-spacing:-0.8px;color:#f3e9b8">0</div><svg class="a" style="left:32px;top:0" width="16" height="20"><rect x="0" y="0" width="16" height="20" fill="#fff"/><rect x="1.5" y="1.5" width="13" height="8" fill="#efefef" stroke="#c6c6c6"/><rect x="1.5" y="10.5" width="13" height="8" fill="#efefef" stroke="#c6c6c6"/><path d="M5 7.3 L10.5 7.3 L7.75 4.3 Z" fill="#000"/><path d="M5 13.5 L10.5 13.5 L7.75 16.5 Z" fill="#000"/></svg></div>
<div class="lbl" style="left:245px;top:541px">ms</div>
<div class="lbl" style="left:10px;top:571px;letter-spacing:-0.2px">Frequence</div>
<div class="lbl" style="left:98px;top:571px">Q</div>
<div class="lbl" style="left:141px;top:571px">Boost</div>
<div class="lbl" style="left:216px;top:571px">Type</div>
<div class="a" style="left:8px;top:587px;width:65px;height:22px;background:#2d2d21;border:1px solid #a4a7b6"><div class="t" style="left:0;top:0.5px;width:47px;text-align:center;font-size:14px;letter-spacing:-0.8px;color:#808078">1000</div><svg class="a" style="left:47px;top:0" width="16" height="19"><rect x="0" y="0" width="16" height="19" fill="#fff"/><rect x="1.5" y="1.5" width="13" height="7" fill="#efefef" stroke="#c6c6c6"/><rect x="1.5" y="9.5" width="13" height="7" fill="#efefef" stroke="#c6c6c6"/><path d="M5 6.8 L10.5 6.8 L7.75 3.8 Z" fill="#7a7a7a"/><path d="M5 12.0 L10.5 12.0 L7.75 15.0 Z" fill="#7a7a7a"/></svg></div>
<div class="a" style="left:74px;top:587px;width:65px;height:22px;background:#2d2d21;border:1px solid #a4a7b6"><div class="t" style="left:0;top:0.5px;width:47px;text-align:center;font-size:14px;letter-spacing:-0.8px;color:#808078">5,000</div><svg class="a" style="left:47px;top:0" width="16" height="19"><rect x="0" y="0" width="16" height="19" fill="#fff"/><rect x="1.5" y="1.5" width="13" height="7" fill="#efefef" stroke="#c6c6c6"/><rect x="1.5" y="9.5" width="13" height="7" fill="#efefef" stroke="#c6c6c6"/><path d="M5 6.8 L10.5 6.8 L7.75 3.8 Z" fill="#7a7a7a"/><path d="M5 12.0 L10.5 12.0 L7.75 15.0 Z" fill="#7a7a7a"/></svg></div>
<div class="a" style="left:141px;top:587px;width:52px;height:22px;background:#2d2d21;border:1px solid #a4a7b6"><div class="t" style="left:0;top:0.5px;width:34px;text-align:center;font-size:14px;letter-spacing:-0.8px;color:#808078">0,0</div><svg class="a" style="left:34px;top:0" width="16" height="19"><rect x="0" y="0" width="16" height="19" fill="#fff"/><rect x="1.5" y="1.5" width="13" height="7" fill="#efefef" stroke="#c6c6c6"/><rect x="1.5" y="9.5" width="13" height="7" fill="#efefef" stroke="#c6c6c6"/><path d="M5 6.8 L10.5 6.8 L7.75 3.8 Z" fill="#7a7a7a"/><path d="M5 12.0 L10.5 12.0 L7.75 15.0 Z" fill="#7a7a7a"/></svg></div>
<div class="ddl" style="left:194px;top:585px;width:85px;height:23px;background:#cccccc;border-color:#c4c4c4"><div class="t" style="left:3px;top:3.4px;color:#838383;letter-spacing:-0.7px">PEQ</div><svg class="a" style="left:70px;top:8px" width="10" height="7"><path d="M1.4 1L5.1 4.7L8.8 1" fill="none" stroke="#a8a8a8" stroke-width="1.3"/></svg></div>
<div class="cb" style="left:282px;top:590px;width:13px;height:13px"><svg class="a" style="left:0;top:0" width="11" height="11"><path d="M0.8 5.2L4.5 8.6L10.4 1.6" fill="none" stroke="#333" stroke-width="1.4"/></svg></div>
<div class="a" style="left:8px;top:616px;width:65px;height:22px;background:#2d2d21;border:1px solid #a4a7b6"><div class="t" style="left:0;top:0.5px;width:47px;text-align:center;font-size:14px;letter-spacing:-0.8px;color:#808078">1000</div><svg class="a" style="left:47px;top:0" width="16" height="19"><rect x="0" y="0" width="16" height="19" fill="#fff"/><rect x="1.5" y="1.5" width="13" height="7" fill="#efefef" stroke="#c6c6c6"/><rect x="1.5" y="9.5" width="13" height="7" fill="#efefef" stroke="#c6c6c6"/><path d="M5 6.8 L10.5 6.8 L7.75 3.8 Z" fill="#7a7a7a"/><path d="M5 12.0 L10.5 12.0 L7.75 15.0 Z" fill="#7a7a7a"/></svg></div>
<div class="a" style="left:74px;top:616px;width:65px;height:22px;background:#2d2d21;border:1px solid #a4a7b6"><div class="t" style="left:0;top:0.5px;width:47px;text-align:center;font-size:14px;letter-spacing:-0.8px;color:#808078">5,000</div><svg class="a" style="left:47px;top:0" width="16" height="19"><rect x="0" y="0" width="16" height="19" fill="#fff"/><rect x="1.5" y="1.5" width="13" height="7" fill="#efefef" stroke="#c6c6c6"/><rect x="1.5" y="9.5" width="13" height="7" fill="#efefef" stroke="#c6c6c6"/><path d="M5 6.8 L10.5 6.8 L7.75 3.8 Z" fill="#7a7a7a"/><path d="M5 12.0 L10.5 12.0 L7.75 15.0 Z" fill="#7a7a7a"/></svg></div>
<div class="a" style="left:141px;top:616px;width:52px;height:22px;background:#2d2d21;border:1px solid #a4a7b6"><div class="t" style="left:0;top:0.5px;width:34px;text-align:center;font-size:14px;letter-spacing:-0.8px;color:#808078">0,0</div><svg class="a" style="left:34px;top:0" width="16" height="19"><rect x="0" y="0" width="16" height="19" fill="#fff"/><rect x="1.5" y="1.5" width="13" height="7" fill="#efefef" stroke="#c6c6c6"/><rect x="1.5" y="9.5" width="13" height="7" fill="#efefef" stroke="#c6c6c6"/><path d="M5 6.8 L10.5 6.8 L7.75 3.8 Z" fill="#7a7a7a"/><path d="M5 12.0 L10.5 12.0 L7.75 15.0 Z" fill="#7a7a7a"/></svg></div>
<div class="ddl" style="left:194px;top:614px;width:85px;height:23px;background:#cccccc;border-color:#c4c4c4"><div class="t" style="left:3px;top:3.4px;color:#838383;letter-spacing:-0.7px">PEQ</div><svg class="a" style="left:70px;top:8px" width="10" height="7"><path d="M1.4 1L5.1 4.7L8.8 1" fill="none" stroke="#a8a8a8" stroke-width="1.3"/></svg></div>
<div class="cb" style="left:282px;top:619px;width:13px;height:13px"><svg class="a" style="left:0;top:0" width="11" height="11"><path d="M0.8 5.2L4.5 8.6L10.4 1.6" fill="none" stroke="#333" stroke-width="1.4"/></svg></div>
<div class="t" style="left:314px;top:438px;font-size:17px;letter-spacing:-0.9px;color:#0000ff">Mid</div>
<div class="lbl" style="left:389px;top:439px">Freq</div>
<div class="lbl" style="left:486px;top:439px">Type</div>
<div class="a" style="left:368px;top:459px;width:75px;height:23px;background:#2d2d21;border:1px solid #a4a7b6"><div class="t" style="left:0;top:1.5px;width:57px;text-align:center;font-size:14px;letter-spacing:-0.8px;color:#f3e9b8">10</div><svg class="a" style="left:57px;top:0" width="16" height="20"><rect x="0" y="0" width="16" height="20" fill="#fff"/><rect x="1.5" y="1.5" width="13" height="8" fill="#efefef" stroke="#c6c6c6"/><rect x="1.5" y="10.5" width="13" height="8" fill="#efefef" stroke="#c6c6c6"/><path d="M5 7.3 L10.5 7.3 L7.75 4.3 Z" fill="#000"/><path d="M5 13.5 L10.5 13.5 L7.75 16.5 Z" fill="#000"/></svg></div>
<div class="ddl" style="left:459px;top:459px;width:117px;height:24px;background:#e1e1e1;border-color:#adadad"><div class="t" style="left:3px;top:4.4px;color:#000;letter-spacing:-0.7px">Butterw 12</div><svg class="a" style="left:102px;top:9px" width="10" height="7"><path d="M1.4 1L5.1 4.7L8.8 1" fill="none" stroke="#333" stroke-width="1.3"/></svg></div>
<div class="a" style="left:368px;top:492px;width:75px;height:23px;background:#2d2d21;border:1px solid #a4a7b6"><div class="t" style="left:0;top:1.5px;width:57px;text-align:center;font-size:14px;letter-spacing:-0.8px;color:#f3e9b8">1000</div><svg class="a" style="left:57px;top:0" width="16" height="20"><rect x="0" y="0" width="16" height="20" fill="#fff"/><rect x="1.5" y="1.5" width="13" height="8" fill="#efefef" stroke="#c6c6c6"/><rect x="1.5" y="10.5" width="13" height="8" fill="#efefef" stroke="#c6c6c6"/><path d="M5 7.3 L10.5 7.3 L7.75 4.3 Z" fill="#000"/><path d="M5 13.5 L10.5 13.5 L7.75 16.5 Z" fill="#000"/></svg></div>
<div class="ddl" style="left:459px;top:491px;width:117px;height:24px;background:#e1e1e1;border-color:#adadad"><div class="t" style="left:3px;top:4.4px;color:#000;letter-spacing:-0.7px">Butterw 12</div><svg class="a" style="left:102px;top:9px" width="10" height="7"><path d="M1.4 1L5.1 4.7L8.8 1" fill="none" stroke="#333" stroke-width="1.3"/></svg></div>
<div class="lbl" style="left:370px;top:520px">Gain</div>
<div class="lbl" style="left:468px;top:520px">Inv</div>
<div class="lbl" style="left:501px;top:520px">Délai</div>
<div class="a" style="left:369px;top:537px;width:75px;height:23px;background:#2d2d21;border:1px solid #a4a7b6"><div class="t" style="left:0;top:1.5px;width:57px;text-align:center;font-size:14px;letter-spacing:-0.8px;color:#f3e9b8">0,00</div><svg class="a" style="left:57px;top:0" width="16" height="20"><rect x="0" y="0" width="16" height="20" fill="#fff"/><rect x="1.5" y="1.5" width="13" height="8" fill="#efefef" stroke="#c6c6c6"/><rect x="1.5" y="10.5" width="13" height="8" fill="#efefef" stroke="#c6c6c6"/><path d="M5 7.3 L10.5 7.3 L7.75 4.3 Z" fill="#000"/><path d="M5 13.5 L10.5 13.5 L7.75 16.5 Z" fill="#000"/></svg></div>
<div class="cb" style="left:468px;top:539px;width:13px;height:13px"></div>
<div class="a" style="left:501px;top:537px;width:50px;height:23px;background:#2d2d21;border:1px solid #a4a7b6"><div class="t" style="left:0;top:1.5px;width:32px;text-align:center;font-size:14px;letter-spacing:-0.8px;color:#f3e9b8">0</div><svg class="a" style="left:32px;top:0" width="16" height="20"><rect x="0" y="0" width="16" height="20" fill="#fff"/><rect x="1.5" y="1.5" width="13" height="8" fill="#efefef" stroke="#c6c6c6"/><rect x="1.5" y="10.5" width="13" height="8" fill="#efefef" stroke="#c6c6c6"/><path d="M5 7.3 L10.5 7.3 L7.75 4.3 Z" fill="#000"/><path d="M5 13.5 L10.5 13.5 L7.75 16.5 Z" fill="#000"/></svg></div>
<div class="lbl" style="left:553px;top:539px">ms</div>
<div class="lbl" style="left:313px;top:571px;letter-spacing:-0.2px">Frequence</div>
<div class="lbl" style="left:404px;top:571px">Q</div>
<div class="lbl" style="left:445px;top:571px">Boost</div>
<div class="lbl" style="left:521px;top:571px">Type</div>
<div class="a" style="left:312px;top:587px;width:65px;height:22px;background:#2d2d21;border:1px solid #a4a7b6"><div class="t" style="left:0;top:0.5px;width:47px;text-align:center;font-size:14px;letter-spacing:-0.8px;color:#f3e9b8">1000</div><svg class="a" style="left:47px;top:0" width="16" height="19"><rect x="0" y="0" width="16" height="19" fill="#fff"/><rect x="1.5" y="1.5" width="13" height="7" fill="#efefef" stroke="#c6c6c6"/><rect x="1.5" y="9.5" width="13" height="7" fill="#efefef" stroke="#c6c6c6"/><path d="M5 6.8 L10.5 6.8 L7.75 3.8 Z" fill="#000"/><path d="M5 12.0 L10.5 12.0 L7.75 15.0 Z" fill="#000"/></svg></div>
<div class="ddl" style="left:499px;top:586px;width:85px;height:23px;background:#e1e1e1;border-color:#adadad"><div class="t" style="left:3px;top:3.4px;color:#000;letter-spacing:-0.7px">ButtW HP</div><svg class="a" style="left:70px;top:8px" width="10" height="7"><path d="M1.4 1L5.1 4.7L8.8 1" fill="none" stroke="#333" stroke-width="1.3"/></svg></div>
<div class="cb" style="left:587px;top:591px;width:13px;height:13px"></div>
<div class="a" style="left:312px;top:614px;width:65px;height:22px;background:#2d2d21;border:1px solid #a4a7b6"><div class="t" style="left:0;top:0.5px;width:47px;text-align:center;font-size:14px;letter-spacing:-0.8px;color:#808078">1000</div><svg class="a" style="left:47px;top:0" width="16" height="19"><rect x="0" y="0" width="16" height="19" fill="#fff"/><rect x="1.5" y="1.5" width="13" height="7" fill="#efefef" stroke="#c6c6c6"/><rect x="1.5" y="9.5" width="13" height="7" fill="#efefef" stroke="#c6c6c6"/><path d="M5 6.8 L10.5 6.8 L7.75 3.8 Z" fill="#7a7a7a"/><path d="M5 12.0 L10.5 12.0 L7.75 15.0 Z" fill="#7a7a7a"/></svg></div>
<div class="a" style="left:379px;top:614px;width:65px;height:22px;background:#2d2d21;border:1px solid #a4a7b6"><div class="t" style="left:0;top:0.5px;width:47px;text-align:center;font-size:14px;letter-spacing:-0.8px;color:#808078">5,000</div><svg class="a" style="left:47px;top:0" width="16" height="19"><rect x="0" y="0" width="16" height="19" fill="#fff"/><rect x="1.5" y="1.5" width="13" height="7" fill="#efefef" stroke="#c6c6c6"/><rect x="1.5" y="9.5" width="13" height="7" fill="#efefef" stroke="#c6c6c6"/><path d="M5 6.8 L10.5 6.8 L7.75 3.8 Z" fill="#7a7a7a"/><path d="M5 12.0 L10.5 12.0 L7.75 15.0 Z" fill="#7a7a7a"/></svg></div>
<div class="a" style="left:445px;top:614px;width:52px;height:22px;background:#2d2d21;border:1px solid #a4a7b6"><div class="t" style="left:0;top:0.5px;width:34px;text-align:center;font-size:14px;letter-spacing:-0.8px;color:#808078">0,0</div><svg class="a" style="left:34px;top:0" width="16" height="19"><rect x="0" y="0" width="16" height="19" fill="#fff"/><rect x="1.5" y="1.5" width="13" height="7" fill="#efefef" stroke="#c6c6c6"/><rect x="1.5" y="9.5" width="13" height="7" fill="#efefef" stroke="#c6c6c6"/><path d="M5 6.8 L10.5 6.8 L7.75 3.8 Z" fill="#7a7a7a"/><path d="M5 12.0 L10.5 12.0 L7.75 15.0 Z" fill="#7a7a7a"/></svg></div>
<div class="ddl" style="left:499px;top:613px;width:85px;height:23px;background:#cccccc;border-color:#c4c4c4"><div class="t" style="left:3px;top:3.4px;color:#838383;letter-spacing:-0.7px">PEQ</div><svg class="a" style="left:70px;top:8px" width="10" height="7"><path d="M1.4 1L5.1 4.7L8.8 1" fill="none" stroke="#a8a8a8" stroke-width="1.3"/></svg></div>
<div class="cb" style="left:587px;top:618px;width:13px;height:13px"><svg class="a" style="left:0;top:0" width="11" height="11"><path d="M0.8 5.2L4.5 8.6L10.4 1.6" fill="none" stroke="#333" stroke-width="1.4"/></svg></div>
<div class="t" style="left:614px;top:435px;font-size:17px;color:#008000">High</div>
<div class="lbl" style="left:692px;top:439px">Freq</div>
<div class="lbl" style="left:779px;top:439px">Type</div>
<div class="a" style="left:670px;top:459px;width:75px;height:23px;background:#2d2d21;border:1px solid #a4a7b6"><div class="t" style="left:0;top:1.5px;width:57px;text-align:center;font-size:14px;letter-spacing:-0.8px;color:#f3e9b8">1000</div><svg class="a" style="left:57px;top:0" width="16" height="20"><rect x="0" y="0" width="16" height="20" fill="#fff"/><rect x="1.5" y="1.5" width="13" height="8" fill="#efefef" stroke="#c6c6c6"/><rect x="1.5" y="10.5" width="13" height="8" fill="#efefef" stroke="#c6c6c6"/><path d="M5 7.3 L10.5 7.3 L7.75 4.3 Z" fill="#000"/><path d="M5 13.5 L10.5 13.5 L7.75 16.5 Z" fill="#000"/></svg></div>
<div class="ddl" style="left:763px;top:458px;width:117px;height:24px;background:#e1e1e1;border-color:#adadad"><div class="t" style="left:3px;top:4.4px;color:#000;letter-spacing:-0.7px">Butterw 18</div><svg class="a" style="left:102px;top:9px" width="10" height="7"><path d="M1.4 1L5.1 4.7L8.8 1" fill="none" stroke="#333" stroke-width="1.3"/></svg></div>
<div class="lbl" style="left:672px;top:520px">Gain</div>
<div class="lbl" style="left:772px;top:520px">Inv</div>
<div class="lbl" style="left:805px;top:520px">Délai</div>
<div class="a" style="left:671px;top:537px;width:75px;height:23px;background:#2d2d21;border:1px solid #a4a7b6"><div class="t" style="left:0;top:1.5px;width:57px;text-align:center;font-size:14px;letter-spacing:-0.8px;color:#f3e9b8">0,00</div><svg class="a" style="left:57px;top:0" width="16" height="20"><rect x="0" y="0" width="16" height="20" fill="#fff"/><rect x="1.5" y="1.5" width="13" height="8" fill="#efefef" stroke="#c6c6c6"/><rect x="1.5" y="10.5" width="13" height="8" fill="#efefef" stroke="#c6c6c6"/><path d="M5 7.3 L10.5 7.3 L7.75 4.3 Z" fill="#000"/><path d="M5 13.5 L10.5 13.5 L7.75 16.5 Z" fill="#000"/></svg></div>
<div class="cb" style="left:772px;top:541px;width:13px;height:13px"></div>
<div class="a" style="left:805px;top:537px;width:50px;height:23px;background:#2d2d21;border:1px solid #a4a7b6"><div class="t" style="left:0;top:1.5px;width:32px;text-align:center;font-size:14px;letter-spacing:-0.8px;color:#f3e9b8">0</div><svg class="a" style="left:32px;top:0" width="16" height="20"><rect x="0" y="0" width="16" height="20" fill="#fff"/><rect x="1.5" y="1.5" width="13" height="8" fill="#efefef" stroke="#c6c6c6"/><rect x="1.5" y="10.5" width="13" height="8" fill="#efefef" stroke="#c6c6c6"/><path d="M5 7.3 L10.5 7.3 L7.75 4.3 Z" fill="#000"/><path d="M5 13.5 L10.5 13.5 L7.75 16.5 Z" fill="#000"/></svg></div>
<div class="lbl" style="left:857px;top:543px">ms</div>
<div class="lbl" style="left:614px;top:571px;letter-spacing:-0.2px">Frequence</div>
<div class="lbl" style="left:701px;top:571px">Q</div>
<div class="lbl" style="left:748px;top:571px">Boost</div>
<div class="lbl" style="left:819px;top:571px">Type</div>
<div class="a" style="left:614px;top:586px;width:65px;height:22px;background:#2d2d21;border:1px solid #a4a7b6"><div class="t" style="left:0;top:0.5px;width:47px;text-align:center;font-size:14px;letter-spacing:-0.8px;color:#808078">10000</div><svg class="a" style="left:47px;top:0" width="16" height="19"><rect x="0" y="0" width="16" height="19" fill="#fff"/><rect x="1.5" y="1.5" width="13" height="7" fill="#efefef" stroke="#c6c6c6"/><rect x="1.5" y="9.5" width="13" height="7" fill="#efefef" stroke="#c6c6c6"/><path d="M5 6.8 L10.5 6.8 L7.75 3.8 Z" fill="#7a7a7a"/><path d="M5 12.0 L10.5 12.0 L7.75 15.0 Z" fill="#7a7a7a"/></svg></div>
<div class="a" style="left:681px;top:586px;width:65px;height:22px;background:#2d2d21;border:1px solid #a4a7b6"><div class="t" style="left:0;top:0.5px;width:47px;text-align:center;font-size:14px;letter-spacing:-0.8px;color:#808078">5,000</div><svg class="a" style="left:47px;top:0" width="16" height="19"><rect x="0" y="0" width="16" height="19" fill="#fff"/><rect x="1.5" y="1.5" width="13" height="7" fill="#efefef" stroke="#c6c6c6"/><rect x="1.5" y="9.5" width="13" height="7" fill="#efefef" stroke="#c6c6c6"/><path d="M5 6.8 L10.5 6.8 L7.75 3.8 Z" fill="#7a7a7a"/><path d="M5 12.0 L10.5 12.0 L7.75 15.0 Z" fill="#7a7a7a"/></svg></div>
<div class="a" style="left:748px;top:586px;width:52px;height:22px;background:#2d2d21;border:1px solid #a4a7b6"><div class="t" style="left:0;top:0.5px;width:34px;text-align:center;font-size:14px;letter-spacing:-0.8px;color:#808078">0,0</div><svg class="a" style="left:34px;top:0" width="16" height="19"><rect x="0" y="0" width="16" height="19" fill="#fff"/><rect x="1.5" y="1.5" width="13" height="7" fill="#efefef" stroke="#c6c6c6"/><rect x="1.5" y="9.5" width="13" height="7" fill="#efefef" stroke="#c6c6c6"/><path d="M5 6.8 L10.5 6.8 L7.75 3.8 Z" fill="#7a7a7a"/><path d="M5 12.0 L10.5 12.0 L7.75 15.0 Z" fill="#7a7a7a"/></svg></div>
<div class="ddl" style="left:802px;top:585px;width:85px;height:23px;background:#cccccc;border-color:#c4c4c4"><div class="t" style="left:3px;top:3.4px;color:#838383;letter-spacing:-0.7px">PEQ</div><svg class="a" style="left:70px;top:8px" width="10" height="7"><path d="M1.4 1L5.1 4.7L8.8 1" fill="none" stroke="#a8a8a8" stroke-width="1.3"/></svg></div>
<div class="cb" style="left:890px;top:590px;width:13px;height:13px"><svg class="a" style="left:0;top:0" width="11" height="11"><path d="M0.8 5.2L4.5 8.6L10.4 1.6" fill="none" stroke="#333" stroke-width="1.4"/></svg></div>
<div class="a" style="left:614px;top:615px;width:65px;height:22px;background:#2d2d21;border:1px solid #a4a7b6"><div class="t" style="left:0;top:0.5px;width:47px;text-align:center;font-size:14px;letter-spacing:-0.8px;color:#808078">1000</div><svg class="a" style="left:47px;top:0" width="16" height="19"><rect x="0" y="0" width="16" height="19" fill="#fff"/><rect x="1.5" y="1.5" width="13" height="7" fill="#efefef" stroke="#c6c6c6"/><rect x="1.5" y="9.5" width="13" height="7" fill="#efefef" stroke="#c6c6c6"/><path d="M5 6.8 L10.5 6.8 L7.75 3.8 Z" fill="#7a7a7a"/><path d="M5 12.0 L10.5 12.0 L7.75 15.0 Z" fill="#7a7a7a"/></svg></div>
<div class="a" style="left:682px;top:615px;width:65px;height:22px;background:#2d2d21;border:1px solid #a4a7b6"><div class="t" style="left:0;top:0.5px;width:47px;text-align:center;font-size:14px;letter-spacing:-0.8px;color:#808078">5,000</div><svg class="a" style="left:47px;top:0" width="16" height="19"><rect x="0" y="0" width="16" height="19" fill="#fff"/><rect x="1.5" y="1.5" width="13" height="7" fill="#efefef" stroke="#c6c6c6"/><rect x="1.5" y="9.5" width="13" height="7" fill="#efefef" stroke="#c6c6c6"/><path d="M5 6.8 L10.5 6.8 L7.75 3.8 Z" fill="#7a7a7a"/><path d="M5 12.0 L10.5 12.0 L7.75 15.0 Z" fill="#7a7a7a"/></svg></div>
<div class="a" style="left:748px;top:615px;width:52px;height:22px;background:#2d2d21;border:1px solid #a4a7b6"><div class="t" style="left:0;top:0.5px;width:34px;text-align:center;font-size:14px;letter-spacing:-0.8px;color:#808078">0,0</div><svg class="a" style="left:34px;top:0" width="16" height="19"><rect x="0" y="0" width="16" height="19" fill="#fff"/><rect x="1.5" y="1.5" width="13" height="7" fill="#efefef" stroke="#c6c6c6"/><rect x="1.5" y="9.5" width="13" height="7" fill="#efefef" stroke="#c6c6c6"/><path d="M5 6.8 L10.5 6.8 L7.75 3.8 Z" fill="#7a7a7a"/><path d="M5 12.0 L10.5 12.0 L7.75 15.0 Z" fill="#7a7a7a"/></svg></div>
<div class="ddl" style="left:802px;top:614px;width:85px;height:23px;background:#cccccc;border-color:#c4c4c4"><div class="t" style="left:3px;top:3.4px;color:#838383;letter-spacing:-0.7px">PEQ</div><svg class="a" style="left:70px;top:8px" width="10" height="7"><path d="M1.4 1L5.1 4.7L8.8 1" fill="none" stroke="#a8a8a8" stroke-width="1.3"/></svg></div>
<div class="cb" style="left:890px;top:619px;width:13px;height:13px"><svg class="a" style="left:0;top:0" width="11" height="11"><path d="M0.8 5.2L4.5 8.6L10.4 1.6" fill="none" stroke="#333" stroke-width="1.4"/></svg></div>
</body></html>
